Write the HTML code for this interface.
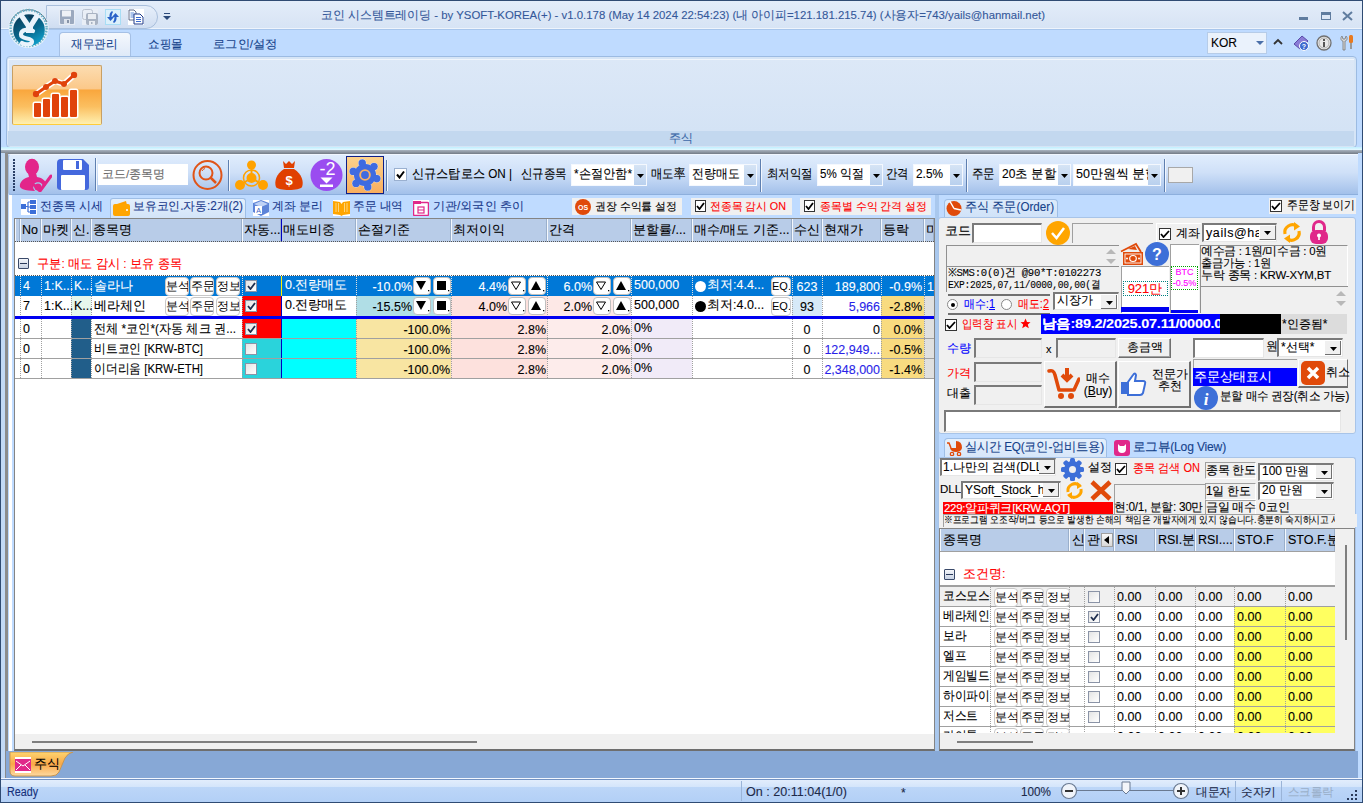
<!DOCTYPE html>
<html><head><meta charset="utf-8">
<style>
*{box-sizing:border-box;margin:0;padding:0}
html,body{width:1363px;height:803px;overflow:hidden;background:#BFDBFF;font-family:"Liberation Sans",sans-serif;font-size:12px;color:#000}
.a{position:absolute}
.t{position:absolute;white-space:nowrap;overflow:visible;-webkit-text-stroke:0.1px currentColor}
.cb{position:absolute;width:13px;height:13px;background:#fff;border:1px solid #8E8F8F}
.cb3{position:absolute;width:12px;height:12px;background:linear-gradient(135deg,#DCDCDC,#fff);border:1px solid #8B94A8}
.gb{position:absolute;background:#fff;border:1px solid #C8C8C8;border-radius:4px;font-size:12px;line-height:17px;text-align:center;white-space:nowrap;overflow:hidden}
.sunk{position:absolute;background:#F0F0F0;border-top:2px solid #7A7A7A;border-left:2px solid #7A7A7A;border-right:1px solid #E6E6E6;border-bottom:1px solid #E6E6E6}
</style></head><body>
<div class="a" style="left:0px;top:0px;width:1363px;height:803px;background:#BFDBFF;border:1px solid #2F4B73;border-bottom:none"></div>
<div class="a" style="left:1px;top:1px;width:1361px;height:28px;background:linear-gradient(#E3EDFA,#DCE7F6 60%,#D7E4F5);border-bottom:1px solid #EEF4FC"></div>
<div class="a" style="left:1px;top:29px;width:1361px;height:1px;background:#A8C6EC"></div>
<div class="a" style="left:1px;top:30px;width:1361px;height:27px;background:#BFDBFF"></div>
<div class="a" style="left:46px;top:5px;width:112px;height:24px;background:linear-gradient(#E7EFFA,#CFDDF1);border:1px solid #A9BFDC;border-radius:0 12px 12px 0"></div>
<svg class="a" style="left:59px;top:9px" width="16" height="16" viewBox="0 0 16 16"><rect x="0" y="0" width="16" height="16" fill="#E6ECF5"/><rect x="1" y="1" width="14" height="14" rx="1" fill="#9AA8BE"/><rect x="3" y="1.5" width="9" height="6" fill="#EEF1F6"/><rect x="5" y="10" width="6" height="5" fill="#DDE3EC"/><rect x="8" y="11" width="2" height="3" fill="#8894A8"/></svg>
<svg class="a" style="left:82px;top:9px" width="16" height="16" viewBox="0 0 16 16"><rect x="0" y="0" width="16" height="16" fill="#E9EEF6"/><rect x="0.5" y="0.5" width="10" height="10" rx="2" fill="none" stroke="#B9C2D0"/><rect x="4" y="4" width="12" height="12" rx="2" fill="#A9B3C3"/><rect x="6" y="5" width="8" height="5" fill="#E8ECF2"/><rect x="7" y="12" width="6" height="4" fill="#E8ECF2"/><rect x="9" y="13" width="1.5" height="2" fill="#A9B3C3"/></svg>
<svg class="a" style="left:105px;top:9px" width="16" height="16" viewBox="0 0 16 16"><rect x="0.5" y="0.5" width="15" height="15" fill="#DCF0FB" stroke="#A8DDF5"/><path d="M7 2 Q4 4 4.5 8 L2 8 L5.5 12 L9 8 L6.5 8 Q6.5 5 8 3 Z" fill="#2A62C8"/><path d="M9 14 Q12 12 11.5 8 L14 8 L10.5 4 L7 8 L9.5 8 Q9.5 11 8 13 Z" fill="#2A62C8"/></svg>
<svg class="a" style="left:128px;top:9px" width="16" height="16" viewBox="0 0 16 16"><rect x="0" y="0" width="16" height="16" fill="#fff"/><path d="M1 1 L6 1 L8 3 L8 11 L1 11 Z" fill="#fff" stroke="#3A4A70" stroke-width="0.8"/><path d="M2.5 4 L6 4 M2.5 6 L6 6 M2.5 8 L6 8" stroke="#5A8AD8"/><path d="M6 5 L12 5 L15 8 L15 15 L6 15 Z" fill="#fff" stroke="#1F3A8A" stroke-width="1"/><path d="M8 8.5 L13 8.5 M8 10.5 L13 10.5 M8 12.5 L13 12.5" stroke="#3A6AD0"/></svg>
<svg class="a" style="left:163px;top:13px" width="8" height="8" viewBox="0 0 8 8"><rect x="1" y="0" width="6" height="1" fill="#2C4A7A"/><path d="M0 3 L8 3 L4 7 Z" fill="#2C4A7A"/></svg>
<svg class="a" style="left:0px;top:0px" width="56" height="52" viewBox="0 0 56 52"><defs><linearGradient id="lg" x1="0.2" y1="0" x2="0.8" y2="1"><stop offset="0" stop-color="#0B3F5C"/><stop offset="0.55" stop-color="#08698E"/><stop offset="1" stop-color="#10A6D2"/></linearGradient></defs>
<circle cx="28.6" cy="28" r="20" fill="#EAF3FB"/>
<path d="M10 24 A19.5 19.5 0 0 1 47 22" fill="none" stroke="#4A5E70" stroke-width="0.9"/>
<circle cx="28.6" cy="28" r="18" fill="none" stroke="#6FB2C8" stroke-width="2.4" stroke-dasharray="1.6 1.3"/>
<circle cx="29" cy="30" r="15.8" fill="url(#lg)"/>
<path d="M18 15 L23 13.5 L29.5 23 L35 14 L40 16 L33 27 L33 33 L26 33 L26 27 Z" fill="#EAF3FB"/>
<path d="M27 15 L34 15 L30.5 20 Z" fill="#0B3F5C"/>
<path d="M33 31 C30 29 21 29 21 34.5 C21 40 32 37 32 41.5 C32 45 25 45 22 43" fill="none" stroke="#EAF3FB" stroke-width="4.2" stroke-linecap="round"/></svg>
<div class="t" id="s0" style="left:321px;top:8px;height:14px;line-height:14px;font-size:11.5px;color:#34589A;transform:scaleX(0.9902);transform-origin:0 50%">코인 시스템트레이딩 - by YSOFT-KOREA(+) - v1.0.178 (May 14 2024 22:54:23) (내 아이피=121.181.215.74) (사용자=743/yails@hanmail.net)</div>
<div class="a" style="left:1299px;top:17px;width:9px;height:3px;background:#5F7C9F"></div>
<div class="a" style="left:1321px;top:12px;width:10px;height:8px;border:1px solid #5F7C9F;border-top:3px solid #5F7C9F"></div>
<svg class="a" style="left:1342px;top:11px" width="11" height="10" viewBox="0 0 11 10"><path d="M1 1 L10 9 M10 1 L1 9" stroke="#5F7C9F" stroke-width="2"/></svg>
<div class="a" style="left:59px;top:32px;width:72px;height:26px;background:linear-gradient(#F4F8FD,#E9F0FA 50%,#DCE8F7);border:1px solid #A5C0E5;border-bottom:none;border-radius:4px 4px 0 0"></div>
<div class="t" id="s1" style="left:71px;top:37px;height:14px;line-height:14px;font-size:11.5px;color:#15428B;transform:scaleX(0.9688);transform-origin:0 50%">재무관리</div>
<div class="t" id="s2" style="left:148px;top:37px;height:14px;line-height:14px;font-size:11.5px;color:#15428B;transform:scaleX(0.9611);transform-origin:0 50%">쇼핑몰</div>
<div class="t" id="s3" style="left:213px;top:37px;height:14px;line-height:14px;font-size:11.5px;color:#15428B;transform:scaleX(1.0221);transform-origin:0 50%">로그인/설정</div>
<div class="a" style="left:1207px;top:32px;width:60px;height:22px;background:#EAF2FC;border:1px solid #B6CCE8"></div>
<div class="t" style="left:1211px;top:36px;height:14px;line-height:14px;font-size:12px;color:#000">KOR</div>
<svg class="a" style="left:1256px;top:41px" width="8" height="5" viewBox="0 0 8 5"><path d="M0 0 L8 0 L4 4 Z" fill="#4A6FA8"/></svg>
<svg class="a" style="left:1273px;top:38px" width="10" height="7" viewBox="0 0 10 7"><path d="M1 6 L5 2 L9 6" fill="none" stroke="#333" stroke-width="1.8"/></svg>
<svg class="a" style="left:1293px;top:35px" width="16" height="16" viewBox="0 0 16 16"><path d="M1 9 L9 1 L15 6 L7 14 Z" fill="#8A7BD6" stroke="#5A4AA8"/><circle cx="11" cy="11" r="4.5" fill="#3E6AD0" stroke="#fff"/><text x="11" y="14" font-size="7" fill="#fff" text-anchor="middle" font-family="Liberation Sans" font-weight="bold">?</text></svg>
<svg class="a" style="left:1316px;top:35px" width="16" height="16" viewBox="0 0 16 16"><circle cx="8" cy="8" r="7" fill="#E8E8E8" stroke="#707070" stroke-width="1.3"/><circle cx="8" cy="8" r="5" fill="none" stroke="#B0B0B0"/><rect x="7" y="7" width="2" height="5" fill="#555"/><rect x="7" y="4" width="2" height="2" fill="#555"/></svg>
<svg class="a" style="left:1339px;top:35px" width="16" height="16" viewBox="0 0 16 16"><path d="M3 1 C1 3 2 6 4 6 L4 15 L6 15 L6 6 C8 6 9 3 7 1 L6 4 L4 4 Z" fill="#D8D8D8" stroke="#777" stroke-width="0.8"/><rect x="10" y="0" width="4" height="8" rx="1.5" fill="#E87A20"/><rect x="11" y="8" width="2" height="6" fill="#999"/></svg>
<div class="a" style="left:6px;top:56px;width:1351px;height:92px;background:#D6E5F6;border:1px solid #9CBBE2;border-radius:4px"></div>
<div class="a" style="left:8px;top:59px;width:1346px;height:72px;background:linear-gradient(#DCE8F7,#D4E3F5);border-top:1px solid #F1F6FC;border-left:1px solid #EEF4FB"></div>
<div class="a" style="left:8px;top:131px;width:1346px;height:15px;background:#C3D8EF"></div>
<div class="t" style="left:669px;top:131px;height:15px;line-height:15px;font-size:11.5px;color:#3D69A8">주식</div>
<div class="a" style="left:12px;top:65px;width:90px;height:60px;background:linear-gradient(#FCDCB0,#FBC889 40%,#F9A63C 41%,#FBBF60 70%,#FFF0B0);border:1px solid #C8A064;border-bottom-color:#FFCC3A;border-radius:2px"></div>
<svg class="a" style="left:30px;top:70px" width="55" height="50" viewBox="0 0 55 50"><g stroke="#fff" stroke-width="3" fill="#E0420B" stroke-linejoin="round">
<rect x="4" y="33" width="7" height="14" rx="1"/><rect x="13" y="29" width="7" height="18" rx="1"/><rect x="22" y="24" width="7" height="23" rx="1"/><rect x="31" y="27" width="7" height="20" rx="1"/><rect x="40" y="20" width="7" height="27" rx="1"/></g>
<g fill="#E0420B"><rect x="4" y="33" width="7" height="14" rx="1"/><rect x="13" y="29" width="7" height="18" rx="1"/><rect x="22" y="24" width="7" height="23" rx="1"/><rect x="31" y="27" width="7" height="20" rx="1"/><rect x="40" y="20" width="7" height="27" rx="1"/></g>
<path d="M6 24 L16 17 L25 11 L34 14 L44 5" fill="none" stroke="#fff" stroke-width="6" stroke-linecap="round" stroke-linejoin="round"/>
<path d="M6 24 L16 17 L25 11 L34 14 L44 5" fill="none" stroke="#E0420B" stroke-width="3" stroke-linecap="round" stroke-linejoin="round"/>
<g fill="#E0420B"><circle cx="6" cy="24" r="3.2"/><circle cx="16" cy="17" r="3"/><circle cx="25" cy="11" r="3"/><circle cx="34" cy="14" r="3"/><circle cx="44" cy="5" r="3.2"/></g></svg>
<div class="a" style="left:1px;top:147px;width:1361px;height:3px;background:linear-gradient(#BFEFFF,#E6F8FF)"></div>
<div class="a" style="left:1px;top:150px;width:1361px;height:4px;background:linear-gradient(#A9B4C0,#737B86)"></div>
<div class="a" style="left:1px;top:153px;width:5px;height:625px;background:#C2D9F5"></div>
<div class="a" style="left:5px;top:153px;width:3px;height:600px;background:#8C8C8C"></div>
<div class="a" style="left:5px;top:753px;width:1px;height:25px;background:#8C8C8C"></div>
<div class="a" style="left:8px;top:154px;width:1350px;height:41px;background:linear-gradient(#E0EDFD,#CFE0F8 45%,#AFC9EE 85%,#A2C0EA);border-top:1px solid #F0F6FE;border-left:1px solid #A7BEDD;border-bottom:1px solid #8DAFDD;border-radius:3px 0 0 3px"></div>
<div class="a" style="left:13px;top:159px;width:2px;height:2px;background:#2A3F66"></div>
<div class="a" style="left:13px;top:162px;width:2px;height:2px;background:#2A3F66"></div>
<div class="a" style="left:13px;top:165px;width:2px;height:2px;background:#2A3F66"></div>
<div class="a" style="left:13px;top:168px;width:2px;height:2px;background:#2A3F66"></div>
<div class="a" style="left:13px;top:171px;width:2px;height:2px;background:#2A3F66"></div>
<div class="a" style="left:13px;top:174px;width:2px;height:2px;background:#2A3F66"></div>
<div class="a" style="left:13px;top:177px;width:2px;height:2px;background:#2A3F66"></div>
<div class="a" style="left:13px;top:180px;width:2px;height:2px;background:#2A3F66"></div>
<div class="a" style="left:13px;top:183px;width:2px;height:2px;background:#2A3F66"></div>
<div class="a" style="left:13px;top:186px;width:2px;height:2px;background:#2A3F66"></div>
<div class="a" style="left:13px;top:189px;width:2px;height:2px;background:#2A3F66"></div>
<svg class="a" style="left:19px;top:158px" width="33" height="34" viewBox="0 0 33 34"><ellipse cx="13" cy="9" rx="7" ry="8.3" fill="#E3258A"/><path d="M9 15 L17 15 L18 19 C24 20 27 23 27 27 L22 33 C14 33 3 33 1 29 C0 24 5 20 10 19 Z" fill="#E3258A"/><circle cx="19" cy="29" r="4.2" fill="none" stroke="#9CD3F0" stroke-width="1.3"/><path d="M15 27 L21 33 L32 18" fill="none" stroke="#E3258A" stroke-width="3" stroke-linecap="round"/></svg>
<svg class="a" style="left:57px;top:158px" width="33" height="33" viewBox="0 0 33 33"><path d="M0 5 Q0 1 4 1 L26 1 L32 7 L32 29 Q32 32 29 32 L4 32 Q0 32 0 29 Z" fill="#4468DD"/><rect x="6" y="2" width="19" height="10" rx="1" fill="#fff"/><rect x="19" y="3" width="3" height="8" fill="#4468DD"/><rect x="4" y="17" width="24" height="15" rx="1" fill="#fff"/></svg>
<div class="a" style="left:95px;top:158px;width:1px;height:33px;background:#5E7FB0"></div>
<div class="a" style="left:96px;top:158px;width:1px;height:33px;background:#F2F7FE"></div>
<div class="a" style="left:98px;top:164px;width:90px;height:21px;background:#fff"></div>
<div class="t" style="left:102px;top:167px;height:15px;line-height:15px;font-size:11.5px;color:#6A6A6A">코드/종목명</div>
<svg class="a" style="left:192px;top:159px" width="31" height="32" viewBox="0 0 31 32"><circle cx="15.5" cy="16" r="14" fill="none" stroke="#E05418" stroke-width="2"/><circle cx="14" cy="14" r="6.5" fill="none" stroke="#E05418" stroke-width="2"/><path d="M18.5 18.5 L24 24" stroke="#E05418" stroke-width="2.5"/><path d="M10 12 Q11 10 13 9.5" stroke="#E05418" fill="none" stroke-width="1"/></svg>
<div class="a" style="left:228px;top:160px;width:1px;height:31px;background:#5E7FB0"></div>
<div class="a" style="left:229px;top:160px;width:1px;height:31px;background:#F2F7FE"></div>
<svg class="a" style="left:235px;top:160px" width="33" height="31" viewBox="0 0 33 31"><g fill="#FFA200"><circle cx="16.5" cy="5" r="4.5"/><circle cx="16.5" cy="18" r="5"/><circle cx="5" cy="25" r="5"/><circle cx="28" cy="25" r="5"/></g><path d="M16.5 5 L16.5 18 L5 25 M16.5 18 L28 25" stroke="#FFA200" stroke-width="2" fill="none"/><circle cx="16.5" cy="18" r="8" fill="none" stroke="#FFA200" stroke-width="1.5"/></svg>
<svg class="a" style="left:274px;top:160px" width="30" height="31" viewBox="0 0 30 31"><path d="M9 1 L12 4 L15 1 L18 4 L21 1 L20 8 L10 8 Z" fill="#E04000"/><path d="M10 9 C2 14 0 22 2 27 C4 31 26 31 28 27 C30 22 28 14 20 9 Z" fill="#E04000"/><text x="15" y="25" font-size="13" fill="#fff" text-anchor="middle" font-family="Liberation Sans" font-weight="bold">$</text></svg>
<svg class="a" style="left:310px;top:159px" width="33" height="32" viewBox="0 0 33 32"><circle cx="16.5" cy="16" r="16" fill="#9A4CF0"/><text x="17.5" y="16" font-size="18" fill="#fff" text-anchor="middle" font-family="Liberation Sans">-2</text><path d="M10.5 18.5 L22.5 18.5 L16.5 24.5 Z" fill="#fff"/><rect x="10" y="25.5" width="13" height="2.5" fill="#fff"/></svg>
<div class="a" style="left:346px;top:156px;width:38px;height:38px;background:linear-gradient(#FDD28C,#F9AE5E);border:1.5px solid #0E1E86"></div>
<svg class="a" style="left:347px;top:157px" width="36" height="36" viewBox="0 0 36 36"><g fill="#3F6BE0" stroke="#fff" stroke-width="0.6"><circle cx="18" cy="18" r="11"/><circle cx="15.23" cy="6.02" r="3.8"/><circle cx="27.00" cy="9.61" r="3.8"/><circle cx="29.76" cy="21.60" r="3.8"/><circle cx="20.77" cy="29.98" r="3.8"/><circle cx="9.00" cy="26.39" r="3.8"/><circle cx="6.24" cy="14.40" r="3.8"/></g><g fill="#3F6BE0"><circle cx="18" cy="18" r="11"/><circle cx="15.23" cy="6.02" r="3.6"/><circle cx="27.00" cy="9.61" r="3.6"/><circle cx="29.76" cy="21.60" r="3.6"/><circle cx="20.77" cy="29.98" r="3.6"/><circle cx="9.00" cy="26.39" r="3.6"/><circle cx="6.24" cy="14.40" r="3.6"/></g><circle cx="18" cy="18" r="5.8" fill="#F9B163"/><circle cx="18" cy="18" r="3.9" fill="#3F6BE0"/></svg>
<div class="a" style="left:386px;top:160px;width:1px;height:31px;background:#5E7FB0"></div>
<div class="a" style="left:387px;top:160px;width:1px;height:31px;background:#F2F7FE"></div>
<div class="a" style="left:394px;top:168px;width:13px;height:13px;background:#fff;border:1px solid #9AB0D0"></div>
<svg class="a" style="left:396px;top:170px" width="9" height="9" viewBox="0 0 9 9"><path d="M1 4.5 L3.5 7.5 L8 1.5" fill="none" stroke="#000" stroke-width="2"/></svg>
<div class="t" id="s4" style="left:412px;top:166px;height:16px;line-height:16px;font-size:12.5px;color:#000;transform:scaleX(0.9350);transform-origin:0 50%">신규스탑로스 ON |</div>
<div class="t" id="s5" style="left:521px;top:166px;height:16px;line-height:16px;font-size:12.5px;color:#000;transform:scaleX(0.8846);transform-origin:0 50%">신규종목</div>
<div class="a" style="left:571px;top:164px;width:76px;height:22px;background:#fff;border:1px solid #F4F8FE"></div>
<div class="t" id="s6" style="left:574px;top:166px;height:16px;line-height:16px;font-size:12.5px;color:#000;transform:scaleX(0.9395);transform-origin:0 50%">*손절안함*</div>
<div class="a" style="left:634px;top:165px;width:12px;height:20px;background:linear-gradient(#D6E4F5,#B9D0EE)"></div>
<svg class="a" style="left:637px;top:174px" width="7" height="4" viewBox="0 0 7 4"><path d="M0 0 L7 0 L3.5 4 Z" fill="#000"/></svg>
<div class="t" id="s7" style="left:651px;top:166px;height:16px;line-height:16px;font-size:12.5px;color:#000;transform:scaleX(0.8795);transform-origin:0 50%">매도率</div>
<div class="a" style="left:689px;top:164px;width:68px;height:22px;background:#fff;border:1px solid #F4F8FE"></div>
<div class="t" id="s8" style="left:692px;top:166px;height:16px;line-height:16px;font-size:12.5px;color:#000;transform:scaleX(0.9154);transform-origin:0 50%">전량매도</div>
<div class="a" style="left:744px;top:165px;width:12px;height:20px;background:linear-gradient(#D6E4F5,#B9D0EE)"></div>
<svg class="a" style="left:747px;top:174px" width="7" height="4" viewBox="0 0 7 4"><path d="M0 0 L7 0 L3.5 4 Z" fill="#000"/></svg>
<div class="a" style="left:760px;top:159px;width:1px;height:33px;background:#5E7FB0"></div>
<div class="a" style="left:761px;top:159px;width:1px;height:33px;background:#F2F7FE"></div>
<div class="t" id="s9" style="left:767px;top:166px;height:16px;line-height:16px;font-size:12.5px;color:#000;transform:scaleX(0.8846);transform-origin:0 50%">최저익절</div>
<div class="a" style="left:817px;top:164px;width:66px;height:22px;background:#fff;border:1px solid #F4F8FE"></div>
<div class="t" id="s10" style="left:820px;top:166px;height:16px;line-height:16px;font-size:12.5px;color:#000;transform:scaleX(0.9254);transform-origin:0 50%">5% 익절</div>
<div class="a" style="left:870px;top:165px;width:12px;height:20px;background:linear-gradient(#D6E4F5,#B9D0EE)"></div>
<svg class="a" style="left:873px;top:174px" width="7" height="4" viewBox="0 0 7 4"><path d="M0 0 L7 0 L3.5 4 Z" fill="#000"/></svg>
<div class="t" id="s11" style="left:886px;top:166px;height:16px;line-height:16px;font-size:12.5px;color:#000;transform:scaleX(0.8692);transform-origin:0 50%">간격</div>
<div class="a" style="left:913px;top:164px;width:50px;height:22px;background:#fff;border:1px solid #F4F8FE"></div>
<div class="t" id="s12" style="left:916px;top:166px;height:16px;line-height:16px;font-size:12.5px;color:#000;transform:scaleX(0.9474);transform-origin:0 50%">2.5%</div>
<div class="a" style="left:950px;top:165px;width:12px;height:20px;background:linear-gradient(#D6E4F5,#B9D0EE)"></div>
<svg class="a" style="left:953px;top:174px" width="7" height="4" viewBox="0 0 7 4"><path d="M0 0 L7 0 L3.5 4 Z" fill="#000"/></svg>
<div class="a" style="left:966px;top:159px;width:1px;height:33px;background:#5E7FB0"></div>
<div class="a" style="left:967px;top:159px;width:1px;height:33px;background:#F2F7FE"></div>
<div class="t" id="s13" style="left:972px;top:166px;height:16px;line-height:16px;font-size:12.5px;color:#000;transform:scaleX(0.8846);transform-origin:0 50%">주문</div>
<div class="a" style="left:999px;top:164px;width:72px;height:22px;background:#fff;border:1px solid #F4F8FE"></div>
<div class="t" id="s14" style="left:1002px;top:166px;height:16px;line-height:16px;font-size:12.5px;color:#000;transform:scaleX(0.9576);transform-origin:0 50%">20초 분할</div>
<div class="a" style="left:1058px;top:165px;width:12px;height:20px;background:linear-gradient(#D6E4F5,#B9D0EE)"></div>
<svg class="a" style="left:1061px;top:174px" width="7" height="4" viewBox="0 0 7 4"><path d="M0 0 L7 0 L3.5 4 Z" fill="#000"/></svg>
<div class="a" style="left:1073px;top:164px;width:88px;height:22px;overflow:hidden;background:#fff;border:1px solid #F4F8FE"><div class="t" style="left:2px;top:1px;line-height:16px;font-size:12.5px">50만원씩 분할</div></div>
<div class="a" style="left:1148px;top:165px;width:12px;height:20px;background:linear-gradient(#D6E4F5,#B9D0EE)"></div>
<svg class="a" style="left:1151px;top:174px" width="7" height="4" viewBox="0 0 7 4"><path d="M0 0 L7 0 L3.5 4 Z" fill="#000"/></svg>
<div class="a" style="left:1164px;top:159px;width:1px;height:33px;background:#5E7FB0"></div>
<div class="a" style="left:1165px;top:159px;width:1px;height:33px;background:#F2F7FE"></div>
<div class="a" style="left:1168px;top:167px;width:25px;height:16px;background:#F0F0F0;border:1px solid #A8A8A8"></div>
<div class="a" style="left:8px;top:195px;width:1350px;height:557px;background:#BFDBFF"></div>
<div class="a" style="left:9px;top:195px;width:3px;height:557px;background:#fff"></div>
<div class="a" style="left:110px;top:198px;width:136px;height:20px;background:linear-gradient(#E4EFFC,#D3E4F8);border:1px solid #9EBEE6;border-bottom:none;border-radius:3px 3px 0 0"></div>
<svg class="a" style="left:21px;top:199px" width="16" height="16" viewBox="0 0 16 16"><rect width="16" height="16" fill="#fff"/><rect x="0" y="5" width="5" height="5" fill="#3C6FD8"/><rect x="9" y="1" width="6" height="4" fill="#3C6FD8"/><rect x="9" y="6" width="6" height="4" fill="#3C6FD8"/><rect x="9" y="11" width="6" height="4" fill="#3C6FD8"/><path d="M5 7.5 L7 7.5 M7 3 L7 13 M7 3 L9 3 M7 8 L9 8 M7 13 L9 13" stroke="#3C6FD8" stroke-width="1.2" fill="none"/></svg>
<div class="t" id="s15" style="left:40px;top:199px;height:15px;line-height:15px;font-size:12px;color:#1A3A8C;transform:scaleX(0.9946);transform-origin:0 50%">전종목 시세</div>
<svg class="a" style="left:113px;top:200px" width="17" height="16" viewBox="0 0 17 16"><path d="M1 5 L13 1 L14 5 Z" fill="#FFA000"/><rect x="0" y="4" width="17" height="12" rx="2" fill="#FFA500"/><circle cx="14" cy="10" r="1" fill="#fff"/></svg>
<div class="t" id="s16" style="left:133px;top:199px;height:15px;line-height:15px;font-size:12px;color:#1A3A8C;transform:scaleX(0.9820);transform-origin:0 50%">보유코인.자동:2개(2)</div>
<svg class="a" style="left:253px;top:200px" width="16" height="16" viewBox="0 0 16 16"><rect width="16" height="16" fill="#fff"/><path d="M8 0 L16 3 L16 12 L8 16 L0 12 L0 3 Z" fill="#5D84D8"/><path d="M1 4 L8 7 L15 4 L8 1 Z" fill="#BFD2F5"/><rect x="2" y="6" width="7" height="8" fill="#fff"/><text x="5.5" y="13" font-size="7" fill="#3A5FC0" text-anchor="middle" font-family="Liberation Sans">A</text></svg>
<div class="t" id="s17" style="left:272px;top:199px;height:15px;line-height:15px;font-size:12px;color:#1A3A8C;transform:scaleX(0.9933);transform-origin:0 50%">계좌 분리</div>
<svg class="a" style="left:333px;top:200px" width="17" height="16" viewBox="0 0 17 16"><rect width="17" height="16" fill="#fff"/><path d="M0 1 L7 2 L8.5 4 L10 2 L17 1 L17 14 L10 15 L8.5 16 L7 15 L0 14 Z" fill="#FFA500"/><path d="M3 3 L3 12 M5.5 3 L5.5 12 M11.5 3 L11.5 12 M14 3 L14 12" stroke="#FFD57A" stroke-width="1"/></svg>
<div class="t" id="s18" style="left:353px;top:199px;height:15px;line-height:15px;font-size:12px;color:#1A3A8C;transform:scaleX(0.9738);transform-origin:0 50%">주문 내역</div>
<svg class="a" style="left:413px;top:200px" width="16" height="16" viewBox="0 0 16 16"><rect width="16" height="16" fill="#fff"/><rect x="0.5" y="2.5" width="15" height="13" rx="1" fill="#fff" stroke="#E0288A" stroke-width="1.5"/><rect x="0" y="1" width="8" height="3" fill="#E0288A"/><rect x="5" y="7" width="6" height="6" fill="none" stroke="#E0288A" stroke-width="1.2"/><path d="M5 10 L11 10" stroke="#E0288A"/></svg>
<div class="t" id="s19" style="left:433px;top:199px;height:15px;line-height:15px;font-size:12px;color:#1A3A8C;transform:scaleX(1.0036);transform-origin:0 50%">기관/외국인 추이</div>
<div class="a" style="left:572px;top:198px;width:110px;height:17px;background:#F0F0F0"></div>
<svg class="a" style="left:575px;top:199px" width="16" height="16" viewBox="0 0 16 16"><circle cx="8" cy="8" r="8" fill="#E04A0A"/><text x="8" y="11" font-size="7" fill="#fff" text-anchor="middle" font-family="Liberation Sans" font-weight="bold">OS</text></svg>
<div class="t" id="s20" style="left:595px;top:199px;height:15px;line-height:15px;font-size:11px;color:#000;transform:scaleX(0.9865);transform-origin:0 50%">권장 수익률 설정</div>
<div class="a" style="left:691px;top:198px;width:101px;height:17px;background:#F0F0F0"></div>
<div class="a" style="left:695px;top:200px;width:11px;height:12px;background:#fff;border:1px solid #333"></div>
<svg class="a" style="left:696px;top:202px" width="9" height="8" viewBox="0 0 9 8"><path d="M1 4 L3.5 7 L8 1" fill="none" stroke="#000" stroke-width="1.8"/></svg>
<div class="t" id="s21" style="left:710px;top:199px;height:15px;line-height:15px;font-size:11px;color:#FF0000;transform:scaleX(0.9791);transform-origin:0 50%">전종목 감시 ON</div>
<div class="a" style="left:800px;top:198px;width:131px;height:17px;background:#F0F0F0"></div>
<div class="a" style="left:804px;top:200px;width:11px;height:12px;background:#fff;border:1px solid #333"></div>
<svg class="a" style="left:805px;top:202px" width="9" height="8" viewBox="0 0 9 8"><path d="M1 4 L3.5 7 L8 1" fill="none" stroke="#000" stroke-width="1.8"/></svg>
<div class="t" id="s22" style="left:820px;top:199px;height:15px;line-height:15px;font-size:11px;color:#FF0000;transform:scaleX(0.9892);transform-origin:0 50%">종목별 수익 간격 설정</div>
<div class="a" style="left:14px;top:218px;width:921px;height:533px;background:#fff;border:1px solid #848484;border-bottom:2px solid #6E6E6E"></div>
<div class="a" style="left:15px;top:219px;width:919px;height:23px;background:#B8CCE8"></div>
<div class="a" style="left:15px;top:219px;width:1px;height:23px;background:#F4F8FD"></div>
<div class="a" style="left:19px;top:219px;width:1px;height:23px;background:#9AAFCB"></div>
<div class="a" style="left:20px;top:219px;width:1px;height:23px;background:#F4F8FD"></div>
<div class="a" style="left:40px;top:219px;width:1px;height:23px;background:#9AAFCB"></div>
<div class="t" style="left:22px;top:221px;width:18px;overflow:hidden;line-height:18px;font-size:12.5px;color:#000">No</div>
<div class="a" style="left:41px;top:219px;width:1px;height:23px;background:#F4F8FD"></div>
<div class="a" style="left:70px;top:219px;width:1px;height:23px;background:#9AAFCB"></div>
<div class="t" style="left:43px;top:221px;width:27px;overflow:hidden;line-height:18px;font-size:12.5px;color:#000">마켓</div>
<div class="a" style="left:71px;top:219px;width:1px;height:23px;background:#F4F8FD"></div>
<div class="a" style="left:90px;top:219px;width:1px;height:23px;background:#9AAFCB"></div>
<div class="t" style="left:73px;top:221px;width:17px;overflow:hidden;line-height:18px;font-size:12.5px;color:#000">신.</div>
<div class="a" style="left:91px;top:219px;width:1px;height:23px;background:#F4F8FD"></div>
<div class="a" style="left:241px;top:219px;width:1px;height:23px;background:#9AAFCB"></div>
<div class="t" style="left:93px;top:221px;width:148px;overflow:hidden;line-height:18px;font-size:12.5px;color:#000">종목명</div>
<div class="a" style="left:242px;top:219px;width:1px;height:23px;background:#F4F8FD"></div>
<div class="a" style="left:280px;top:219px;width:1px;height:23px;background:#9AAFCB"></div>
<div class="t" style="left:244px;top:221px;width:36px;overflow:hidden;line-height:18px;font-size:12.5px;color:#000">자동...</div>
<div class="a" style="left:281px;top:219px;width:1px;height:23px;background:#F4F8FD"></div>
<div class="a" style="left:355px;top:219px;width:1px;height:23px;background:#9AAFCB"></div>
<div class="t" style="left:283px;top:221px;width:72px;overflow:hidden;line-height:18px;font-size:12.5px;color:#000">매도비중</div>
<div class="a" style="left:356px;top:219px;width:1px;height:23px;background:#F4F8FD"></div>
<div class="a" style="left:450px;top:219px;width:1px;height:23px;background:#9AAFCB"></div>
<div class="t" style="left:358px;top:221px;width:92px;overflow:hidden;line-height:18px;font-size:12.5px;color:#000">손절기준</div>
<div class="a" style="left:451px;top:219px;width:1px;height:23px;background:#F4F8FD"></div>
<div class="a" style="left:546px;top:219px;width:1px;height:23px;background:#9AAFCB"></div>
<div class="t" style="left:453px;top:221px;width:93px;overflow:hidden;line-height:18px;font-size:12.5px;color:#000">최저이익</div>
<div class="a" style="left:547px;top:219px;width:1px;height:23px;background:#F4F8FD"></div>
<div class="a" style="left:630px;top:219px;width:1px;height:23px;background:#9AAFCB"></div>
<div class="t" style="left:549px;top:221px;width:81px;overflow:hidden;line-height:18px;font-size:12.5px;color:#000">간격</div>
<div class="a" style="left:631px;top:219px;width:1px;height:23px;background:#F4F8FD"></div>
<div class="a" style="left:691px;top:219px;width:1px;height:23px;background:#9AAFCB"></div>
<div class="t" style="left:633px;top:221px;width:58px;overflow:hidden;line-height:18px;font-size:12.5px;color:#000">분할률/...</div>
<div class="a" style="left:692px;top:219px;width:1px;height:23px;background:#F4F8FD"></div>
<div class="a" style="left:791px;top:219px;width:1px;height:23px;background:#9AAFCB"></div>
<div class="t" style="left:694px;top:221px;width:97px;overflow:hidden;line-height:18px;font-size:12.5px;color:#000">매수/매도 기준...</div>
<div class="a" style="left:792px;top:219px;width:1px;height:23px;background:#F4F8FD"></div>
<div class="a" style="left:821px;top:219px;width:1px;height:23px;background:#9AAFCB"></div>
<div class="t" style="left:794px;top:221px;width:27px;overflow:hidden;line-height:18px;font-size:12.5px;color:#000">수신</div>
<div class="a" style="left:822px;top:219px;width:1px;height:23px;background:#F4F8FD"></div>
<div class="a" style="left:880px;top:219px;width:1px;height:23px;background:#9AAFCB"></div>
<div class="t" style="left:824px;top:221px;width:56px;overflow:hidden;line-height:18px;font-size:12.5px;color:#000">현재가</div>
<div class="a" style="left:881px;top:219px;width:1px;height:23px;background:#F4F8FD"></div>
<div class="a" style="left:923px;top:219px;width:1px;height:23px;background:#9AAFCB"></div>
<div class="t" style="left:883px;top:221px;width:40px;overflow:hidden;line-height:18px;font-size:12.5px;color:#000">등락</div>
<div class="a" style="left:924px;top:219px;width:1px;height:23px;background:#F4F8FD"></div>
<div class="a" style="left:933px;top:219px;width:1px;height:23px;background:#9AAFCB"></div>
<div class="t" style="left:926px;top:221px;width:7px;overflow:hidden;line-height:18px;font-size:12.5px;color:#000">미</div>
<div class="a" style="left:281px;top:219px;width:1px;height:23px;background:#0000C0"></div>
<div class="a" style="left:15px;top:241px;width:919px;height:1px;background:repeating-linear-gradient(90deg,#555 0 1px,transparent 1px 2px)"></div>
<div class="a" style="left:18px;top:258px;width:11px;height:11px;background:linear-gradient(#F4F6FA,#C9D3E4);border:1px solid #3A4A6A;border-radius:1px"></div>
<div class="a" style="left:20px;top:263px;width:7px;height:1px;background:#2A3A5A"></div>
<div class="t" id="s23" style="left:37px;top:256px;height:16px;line-height:16px;font-size:12.5px;color:#FF0000;transform:scaleX(0.9397);transform-origin:0 50%">구분: 매도 감시 : 보유 종목</div>
<div class="a" style="left:15px;top:275px;width:919px;height:1px;background:repeating-linear-gradient(90deg,#555 0 1px,transparent 1px 2px)"></div>
<div class="a" style="left:15px;top:276px;width:919px;height:20px;background:#0078D7"></div>
<div class="a" style="left:20px;top:276px;width:1px;height:20px;background:repeating-linear-gradient(180deg,#E0E0E0 0 1px,transparent 1px 2px)"></div>
<div class="a" style="left:41px;top:276px;width:1px;height:20px;background:repeating-linear-gradient(180deg,#E0E0E0 0 1px,transparent 1px 2px)"></div>
<div class="a" style="left:71px;top:276px;width:1px;height:20px;background:repeating-linear-gradient(180deg,#E0E0E0 0 1px,transparent 1px 2px)"></div>
<div class="a" style="left:91px;top:276px;width:1px;height:20px;background:repeating-linear-gradient(180deg,#E0E0E0 0 1px,transparent 1px 2px)"></div>
<div class="a" style="left:242px;top:276px;width:1px;height:20px;background:repeating-linear-gradient(180deg,#E0E0E0 0 1px,transparent 1px 2px)"></div>
<div class="a" style="left:281px;top:276px;width:1px;height:20px;background:repeating-linear-gradient(180deg,#E0E0E0 0 1px,transparent 1px 2px)"></div>
<div class="a" style="left:356px;top:276px;width:1px;height:20px;background:repeating-linear-gradient(180deg,#E0E0E0 0 1px,transparent 1px 2px)"></div>
<div class="a" style="left:451px;top:276px;width:1px;height:20px;background:repeating-linear-gradient(180deg,#E0E0E0 0 1px,transparent 1px 2px)"></div>
<div class="a" style="left:547px;top:276px;width:1px;height:20px;background:repeating-linear-gradient(180deg,#E0E0E0 0 1px,transparent 1px 2px)"></div>
<div class="a" style="left:631px;top:276px;width:1px;height:20px;background:repeating-linear-gradient(180deg,#E0E0E0 0 1px,transparent 1px 2px)"></div>
<div class="a" style="left:692px;top:276px;width:1px;height:20px;background:repeating-linear-gradient(180deg,#E0E0E0 0 1px,transparent 1px 2px)"></div>
<div class="a" style="left:792px;top:276px;width:1px;height:20px;background:repeating-linear-gradient(180deg,#E0E0E0 0 1px,transparent 1px 2px)"></div>
<div class="a" style="left:822px;top:276px;width:1px;height:20px;background:repeating-linear-gradient(180deg,#E0E0E0 0 1px,transparent 1px 2px)"></div>
<div class="a" style="left:881px;top:276px;width:1px;height:20px;background:repeating-linear-gradient(180deg,#E0E0E0 0 1px,transparent 1px 2px)"></div>
<div class="a" style="left:924px;top:276px;width:1px;height:20px;background:repeating-linear-gradient(180deg,#E0E0E0 0 1px,transparent 1px 2px)"></div>
<div class="a" style="left:281px;top:276px;width:1px;height:20px;background:#FFF000"></div>
<div class="t" style="left:23px;top:278px;height:16px;line-height:16px;color:#fff;font-size:12.5px">4</div>
<div class="t" style="left:44px;top:278px;height:16px;line-height:16px;color:#fff;font-size:12.5px">1:K...</div>
<div class="t" style="left:74px;top:278px;height:16px;line-height:16px;color:#fff;font-size:12.5px">K...</div>
<div class="t" style="left:94px;top:278px;height:16px;line-height:16px;color:#fff;font-size:12.5px">솔라나</div>
<div class="gb" style="left:165px;top:277px;width:24px;height:19px">분석</div>
<div class="gb" style="left:190px;top:277px;width:24px;height:19px">주문</div>
<div class="gb" style="left:216px;top:277px;width:24px;height:19px">정보</div>
<div class="a" style="left:245px;top:280px;width:12px;height:12px;background:linear-gradient(135deg,#E4E4E4,#FFFFFF);border:1px solid #8A93A6"></div>
<svg class="a" style="left:247px;top:282px" width="9" height="8" viewBox="0 0 9 8"><path d="M1 4 L3.5 7 L8 1" fill="none" stroke="#1F2E4E" stroke-width="1.8"/></svg>
<div class="t" style="left:285px;top:277px;height:16px;line-height:16px;color:#fff;font-size:12.5px">0.전량매도</div>
<div class="t" style="left:212px;width:200px;text-align:right;top:279px;height:16px;line-height:16px;color:#fff;font-size:12.5px">-10.0%</div>
<div class="gb" style="left:413px;top:277px;width:18px;height:18px;border-color:#BFBFBF"></div>
<svg class="a" style="left:414px;top:278px" width="16" height="16" viewBox="0 0 16 16"><path d="M2 3 L12 3 L7 12 Z" fill="#000"/><rect x="14" y="12" width="1.3" height="1.3" fill="#000"/></svg>
<div class="gb" style="left:433px;top:277px;width:18px;height:18px;border-color:#BFBFBF"></div>
<svg class="a" style="left:434px;top:278px" width="16" height="16" viewBox="0 0 16 16"><rect x="3" y="3" width="9" height="9" fill="#000"/><rect x="14" y="12" width="1.3" height="1.3" fill="#000"/></svg>
<div class="t" style="left:307px;width:200px;text-align:right;top:279px;height:16px;line-height:16px;color:#fff;font-size:12.5px">4.4%</div>
<div class="gb" style="left:508px;top:277px;width:18px;height:18px;border-color:#BFBFBF"></div>
<svg class="a" style="left:509px;top:278px" width="16" height="16" viewBox="0 0 16 16"><path d="M2.5 4 L11.5 4 L7 11.5 Z" fill="none" stroke="#000" stroke-width="1"/><rect x="14" y="12" width="1.3" height="1.3" fill="#000"/></svg>
<div class="gb" style="left:528px;top:277px;width:18px;height:18px;border-color:#BFBFBF"></div>
<svg class="a" style="left:529px;top:278px" width="16" height="16" viewBox="0 0 16 16"><path d="M2 12 L12 12 L7 3 Z" fill="#000"/><rect x="14" y="12" width="1.3" height="1.3" fill="#000"/></svg>
<div class="t" style="left:392px;width:200px;text-align:right;top:279px;height:16px;line-height:16px;color:#fff;font-size:12.5px">6.0%</div>
<div class="gb" style="left:593px;top:277px;width:18px;height:18px;border-color:#BFBFBF"></div>
<svg class="a" style="left:594px;top:278px" width="16" height="16" viewBox="0 0 16 16"><path d="M2.5 4 L11.5 4 L7 11.5 Z" fill="none" stroke="#000" stroke-width="1"/><rect x="14" y="12" width="1.3" height="1.3" fill="#000"/></svg>
<div class="gb" style="left:613px;top:277px;width:18px;height:18px;border-color:#BFBFBF"></div>
<svg class="a" style="left:614px;top:278px" width="16" height="16" viewBox="0 0 16 16"><path d="M2 12 L12 12 L7 3 Z" fill="#000"/><rect x="14" y="12" width="1.3" height="1.3" fill="#000"/></svg>
<div class="t" style="left:634px;top:277px;height:16px;line-height:16px;color:#fff;font-size:12.5px">500,000</div>
<svg class="a" style="left:695px;top:281px" width="11" height="11" viewBox="0 0 11 11"><circle cx="5.5" cy="5.5" r="5.5" fill="#fff"/></svg>
<div class="t" style="left:707px;top:277px;height:16px;line-height:16px;color:#fff;font-size:12.5px">최저:4.4...</div>
<div class="gb" style="left:771px;top:277px;width:20px;height:19px;font-size:11px;color:#000">EQ.</div>
<div class="t" style="left:792px;width:30px;text-align:center;top:279px;height:16px;line-height:16px;color:#fff;font-size:12.5px">623</div>
<div class="t" style="left:680px;width:200px;text-align:right;top:279px;height:16px;line-height:16px;color:#fff;font-size:12.5px">189,800</div>
<div class="t" style="left:722px;width:200px;text-align:right;top:279px;height:16px;line-height:16px;color:#fff;font-size:12.5px">-0.9%</div>
<div class="t" style="left:927px;top:279px;height:16px;line-height:16px;color:#fff;font-size:12.5px">1</div>
<div class="a" style="left:71px;top:296px;width:20px;height:20px;background:#E6F7EC"></div>
<div class="a" style="left:242px;top:296px;width:39px;height:20px;background:#FF0000"></div>
<div class="a" style="left:356px;top:296px;width:95px;height:20px;background:#B0DEE6"></div>
<div class="a" style="left:451px;top:296px;width:96px;height:20px;background:#FDE1DD"></div>
<div class="a" style="left:547px;top:296px;width:84px;height:20px;background:#FDE8E6"></div>
<div class="a" style="left:792px;top:296px;width:30px;height:20px;background:#D6E9F8"></div>
<div class="a" style="left:881px;top:296px;width:43px;height:20px;background:#F8DB80"></div>
<div class="a" style="left:924px;top:296px;width:10px;height:20px;background:#E0E0E0"></div>
<div class="a" style="left:20px;top:296px;width:1px;height:20px;background:repeating-linear-gradient(180deg,#A0A0A0 0 1px,transparent 1px 2px)"></div>
<div class="a" style="left:41px;top:296px;width:1px;height:20px;background:repeating-linear-gradient(180deg,#A0A0A0 0 1px,transparent 1px 2px)"></div>
<div class="a" style="left:71px;top:296px;width:1px;height:20px;background:repeating-linear-gradient(180deg,#A0A0A0 0 1px,transparent 1px 2px)"></div>
<div class="a" style="left:91px;top:296px;width:1px;height:20px;background:repeating-linear-gradient(180deg,#A0A0A0 0 1px,transparent 1px 2px)"></div>
<div class="a" style="left:242px;top:296px;width:1px;height:20px;background:repeating-linear-gradient(180deg,#A0A0A0 0 1px,transparent 1px 2px)"></div>
<div class="a" style="left:281px;top:296px;width:1px;height:20px;background:repeating-linear-gradient(180deg,#A0A0A0 0 1px,transparent 1px 2px)"></div>
<div class="a" style="left:356px;top:296px;width:1px;height:20px;background:repeating-linear-gradient(180deg,#A0A0A0 0 1px,transparent 1px 2px)"></div>
<div class="a" style="left:451px;top:296px;width:1px;height:20px;background:repeating-linear-gradient(180deg,#A0A0A0 0 1px,transparent 1px 2px)"></div>
<div class="a" style="left:547px;top:296px;width:1px;height:20px;background:repeating-linear-gradient(180deg,#A0A0A0 0 1px,transparent 1px 2px)"></div>
<div class="a" style="left:631px;top:296px;width:1px;height:20px;background:repeating-linear-gradient(180deg,#A0A0A0 0 1px,transparent 1px 2px)"></div>
<div class="a" style="left:692px;top:296px;width:1px;height:20px;background:repeating-linear-gradient(180deg,#A0A0A0 0 1px,transparent 1px 2px)"></div>
<div class="a" style="left:792px;top:296px;width:1px;height:20px;background:repeating-linear-gradient(180deg,#A0A0A0 0 1px,transparent 1px 2px)"></div>
<div class="a" style="left:822px;top:296px;width:1px;height:20px;background:repeating-linear-gradient(180deg,#A0A0A0 0 1px,transparent 1px 2px)"></div>
<div class="a" style="left:881px;top:296px;width:1px;height:20px;background:repeating-linear-gradient(180deg,#A0A0A0 0 1px,transparent 1px 2px)"></div>
<div class="a" style="left:924px;top:296px;width:1px;height:20px;background:repeating-linear-gradient(180deg,#A0A0A0 0 1px,transparent 1px 2px)"></div>
<div class="t" style="left:23px;top:298px;height:16px;line-height:16px;color:#000;font-size:12.5px">7</div>
<div class="t" style="left:44px;top:298px;height:16px;line-height:16px;color:#000;font-size:12.5px">1:K...</div>
<div class="t" style="left:74px;top:298px;height:16px;line-height:16px;color:#000;font-size:12.5px">K...</div>
<div class="t" style="left:94px;top:298px;height:16px;line-height:16px;color:#000;font-size:12.5px">베라체인</div>
<div class="gb" style="left:165px;top:297px;width:24px;height:19px">분석</div>
<div class="gb" style="left:190px;top:297px;width:24px;height:19px">주문</div>
<div class="gb" style="left:216px;top:297px;width:24px;height:19px">정보</div>
<div class="a" style="left:245px;top:300px;width:12px;height:12px;background:linear-gradient(135deg,#E4E4E4,#FFFFFF);border:1px solid #8A93A6"></div>
<svg class="a" style="left:247px;top:302px" width="9" height="8" viewBox="0 0 9 8"><path d="M1 4 L3.5 7 L8 1" fill="none" stroke="#1F2E4E" stroke-width="1.8"/></svg>
<div class="a" style="left:281px;top:296px;width:1px;height:20px;background:#0000C0"></div>
<div class="t" style="left:285px;top:297px;height:16px;line-height:16px;color:#000;font-size:12.5px">0.전량매도</div>
<div class="t" style="left:212px;width:200px;text-align:right;top:299px;height:16px;line-height:16px;color:#000;font-size:12.5px">-15.5%</div>
<div class="gb" style="left:413px;top:297px;width:18px;height:18px;border-color:#BFBFBF"></div>
<svg class="a" style="left:414px;top:298px" width="16" height="16" viewBox="0 0 16 16"><path d="M2 3 L12 3 L7 12 Z" fill="#000"/><rect x="14" y="12" width="1.3" height="1.3" fill="#000"/></svg>
<div class="gb" style="left:433px;top:297px;width:18px;height:18px;border-color:#BFBFBF"></div>
<svg class="a" style="left:434px;top:298px" width="16" height="16" viewBox="0 0 16 16"><rect x="3" y="3" width="9" height="9" fill="#000"/><rect x="14" y="12" width="1.3" height="1.3" fill="#000"/></svg>
<div class="t" style="left:307px;width:200px;text-align:right;top:299px;height:16px;line-height:16px;color:#000;font-size:12.5px">4.0%</div>
<div class="gb" style="left:508px;top:297px;width:18px;height:18px;border-color:#BFBFBF"></div>
<svg class="a" style="left:509px;top:298px" width="16" height="16" viewBox="0 0 16 16"><path d="M2.5 4 L11.5 4 L7 11.5 Z" fill="none" stroke="#000" stroke-width="1"/><rect x="14" y="12" width="1.3" height="1.3" fill="#000"/></svg>
<div class="gb" style="left:528px;top:297px;width:18px;height:18px;border-color:#BFBFBF"></div>
<svg class="a" style="left:529px;top:298px" width="16" height="16" viewBox="0 0 16 16"><path d="M2 12 L12 12 L7 3 Z" fill="#000"/><rect x="14" y="12" width="1.3" height="1.3" fill="#000"/></svg>
<div class="t" style="left:392px;width:200px;text-align:right;top:299px;height:16px;line-height:16px;color:#000;font-size:12.5px">2.0%</div>
<div class="gb" style="left:593px;top:297px;width:18px;height:18px;border-color:#BFBFBF"></div>
<svg class="a" style="left:594px;top:298px" width="16" height="16" viewBox="0 0 16 16"><path d="M2.5 4 L11.5 4 L7 11.5 Z" fill="none" stroke="#000" stroke-width="1"/><rect x="14" y="12" width="1.3" height="1.3" fill="#000"/></svg>
<div class="gb" style="left:613px;top:297px;width:18px;height:18px;border-color:#BFBFBF"></div>
<svg class="a" style="left:614px;top:298px" width="16" height="16" viewBox="0 0 16 16"><path d="M2 12 L12 12 L7 3 Z" fill="#000"/><rect x="14" y="12" width="1.3" height="1.3" fill="#000"/></svg>
<div class="t" style="left:634px;top:297px;height:16px;line-height:16px;color:#000;font-size:12.5px">500,000</div>
<svg class="a" style="left:695px;top:301px" width="11" height="11" viewBox="0 0 11 11"><circle cx="5.5" cy="5.5" r="5.5" fill="#000"/></svg>
<div class="t" style="left:707px;top:297px;height:16px;line-height:16px;color:#000;font-size:12.5px">최저:4.0...</div>
<div class="gb" style="left:771px;top:297px;width:20px;height:19px;font-size:11px;color:#000">EQ.</div>
<div class="t" style="left:792px;width:30px;text-align:center;top:299px;height:16px;line-height:16px;color:#000;font-size:12.5px">93</div>
<div class="t" style="left:680px;width:200px;text-align:right;top:299px;height:16px;line-height:16px;color:#2A1FE8;font-size:12.5px">5,966</div>
<div class="t" style="left:722px;width:200px;text-align:right;top:299px;height:16px;line-height:16px;color:#000;font-size:12.5px">-2.8%</div>
<div class="a" style="left:15px;top:316px;width:919px;height:3px;background:#0000F0"></div>
<div class="a" style="left:71px;top:319px;width:20px;height:20px;background:#215E8A"></div>
<div class="a" style="left:242px;top:319px;width:39px;height:20px;background:#FF0000"></div>
<div class="a" style="left:281px;top:319px;width:75px;height:20px;background:#00FFFF"></div>
<div class="a" style="left:356px;top:319px;width:95px;height:20px;background:#F8E5A2"></div>
<div class="a" style="left:451px;top:319px;width:96px;height:20px;background:#FDE1DD"></div>
<div class="a" style="left:547px;top:319px;width:84px;height:20px;background:#FDECEB"></div>
<div class="a" style="left:631px;top:319px;width:61px;height:20px;background:#F1EBF8"></div>
<div class="a" style="left:881px;top:319px;width:43px;height:20px;background:#F8DB80"></div>
<div class="a" style="left:924px;top:319px;width:10px;height:20px;background:#E0E0E0"></div>
<div class="a" style="left:20px;top:319px;width:1px;height:20px;background:repeating-linear-gradient(180deg,#A0A0A0 0 1px,transparent 1px 2px)"></div>
<div class="a" style="left:41px;top:319px;width:1px;height:20px;background:repeating-linear-gradient(180deg,#A0A0A0 0 1px,transparent 1px 2px)"></div>
<div class="a" style="left:71px;top:319px;width:1px;height:20px;background:repeating-linear-gradient(180deg,#A0A0A0 0 1px,transparent 1px 2px)"></div>
<div class="a" style="left:91px;top:319px;width:1px;height:20px;background:repeating-linear-gradient(180deg,#A0A0A0 0 1px,transparent 1px 2px)"></div>
<div class="a" style="left:242px;top:319px;width:1px;height:20px;background:repeating-linear-gradient(180deg,#A0A0A0 0 1px,transparent 1px 2px)"></div>
<div class="a" style="left:281px;top:319px;width:1px;height:20px;background:repeating-linear-gradient(180deg,#A0A0A0 0 1px,transparent 1px 2px)"></div>
<div class="a" style="left:356px;top:319px;width:1px;height:20px;background:repeating-linear-gradient(180deg,#A0A0A0 0 1px,transparent 1px 2px)"></div>
<div class="a" style="left:451px;top:319px;width:1px;height:20px;background:repeating-linear-gradient(180deg,#A0A0A0 0 1px,transparent 1px 2px)"></div>
<div class="a" style="left:547px;top:319px;width:1px;height:20px;background:repeating-linear-gradient(180deg,#A0A0A0 0 1px,transparent 1px 2px)"></div>
<div class="a" style="left:631px;top:319px;width:1px;height:20px;background:repeating-linear-gradient(180deg,#A0A0A0 0 1px,transparent 1px 2px)"></div>
<div class="a" style="left:692px;top:319px;width:1px;height:20px;background:repeating-linear-gradient(180deg,#A0A0A0 0 1px,transparent 1px 2px)"></div>
<div class="a" style="left:792px;top:319px;width:1px;height:20px;background:repeating-linear-gradient(180deg,#A0A0A0 0 1px,transparent 1px 2px)"></div>
<div class="a" style="left:822px;top:319px;width:1px;height:20px;background:repeating-linear-gradient(180deg,#A0A0A0 0 1px,transparent 1px 2px)"></div>
<div class="a" style="left:881px;top:319px;width:1px;height:20px;background:repeating-linear-gradient(180deg,#A0A0A0 0 1px,transparent 1px 2px)"></div>
<div class="a" style="left:924px;top:319px;width:1px;height:20px;background:repeating-linear-gradient(180deg,#A0A0A0 0 1px,transparent 1px 2px)"></div>
<div class="a" style="left:281px;top:319px;width:1px;height:20px;background:#0000C0"></div>
<div class="a" style="left:15px;top:338px;width:919px;height:1px;background:#A0A0A0"></div>
<div class="t" style="left:23px;top:321px;height:16px;line-height:16px;color:#000;font-size:12.5px">0</div>
<div class="t" id="s24" style="left:94px;top:321px;height:16px;line-height:16px;color:#000;font-size:12.5px;transform:scaleX(0.9358);transform-origin:0 50%">전체 *코인*(자동 체크 권...</div>
<div class="a" style="left:245px;top:323px;width:12px;height:12px;background:linear-gradient(135deg,#E4E4E4,#FFFFFF);border:1px solid #8A93A6"></div>
<svg class="a" style="left:247px;top:325px" width="9" height="8" viewBox="0 0 9 8"><path d="M1 4 L3.5 7 L8 1" fill="none" stroke="#1F2E4E" stroke-width="1.8"/></svg>
<div class="t" style="left:250px;width:200px;text-align:right;top:322px;height:16px;line-height:16px;color:#000;font-size:12.5px">-100.0%</div>
<div class="t" style="left:346px;width:200px;text-align:right;top:322px;height:16px;line-height:16px;color:#000;font-size:12.5px">2.8%</div>
<div class="t" style="left:430px;width:200px;text-align:right;top:322px;height:16px;line-height:16px;color:#000;font-size:12.5px">2.0%</div>
<div class="t" style="left:634px;top:320px;height:16px;line-height:16px;color:#000;font-size:12.5px">0%</div>
<div class="t" style="left:792px;width:30px;text-align:center;top:322px;height:16px;line-height:16px;color:#000;font-size:12.5px">0</div>
<div class="t" style="left:680px;width:200px;text-align:right;top:322px;height:16px;line-height:16px;color:#000;font-size:12.5px">0</div>
<div class="t" style="left:722px;width:200px;text-align:right;top:322px;height:16px;line-height:16px;color:#000;font-size:12.5px">0.0%</div>
<div class="a" style="left:71px;top:339px;width:20px;height:20px;background:#215E8A"></div>
<div class="a" style="left:242px;top:339px;width:39px;height:20px;background:#2AD3DB"></div>
<div class="a" style="left:281px;top:339px;width:75px;height:20px;background:#00FFFF"></div>
<div class="a" style="left:356px;top:339px;width:95px;height:20px;background:#F8E5A2"></div>
<div class="a" style="left:451px;top:339px;width:96px;height:20px;background:#FDE1DD"></div>
<div class="a" style="left:547px;top:339px;width:84px;height:20px;background:#FDECEB"></div>
<div class="a" style="left:631px;top:339px;width:61px;height:20px;background:#F1EBF8"></div>
<div class="a" style="left:881px;top:339px;width:43px;height:20px;background:#F8DB80"></div>
<div class="a" style="left:924px;top:339px;width:10px;height:20px;background:#E0E0E0"></div>
<div class="a" style="left:20px;top:339px;width:1px;height:20px;background:repeating-linear-gradient(180deg,#A0A0A0 0 1px,transparent 1px 2px)"></div>
<div class="a" style="left:41px;top:339px;width:1px;height:20px;background:repeating-linear-gradient(180deg,#A0A0A0 0 1px,transparent 1px 2px)"></div>
<div class="a" style="left:71px;top:339px;width:1px;height:20px;background:repeating-linear-gradient(180deg,#A0A0A0 0 1px,transparent 1px 2px)"></div>
<div class="a" style="left:91px;top:339px;width:1px;height:20px;background:repeating-linear-gradient(180deg,#A0A0A0 0 1px,transparent 1px 2px)"></div>
<div class="a" style="left:242px;top:339px;width:1px;height:20px;background:repeating-linear-gradient(180deg,#A0A0A0 0 1px,transparent 1px 2px)"></div>
<div class="a" style="left:281px;top:339px;width:1px;height:20px;background:repeating-linear-gradient(180deg,#A0A0A0 0 1px,transparent 1px 2px)"></div>
<div class="a" style="left:356px;top:339px;width:1px;height:20px;background:repeating-linear-gradient(180deg,#A0A0A0 0 1px,transparent 1px 2px)"></div>
<div class="a" style="left:451px;top:339px;width:1px;height:20px;background:repeating-linear-gradient(180deg,#A0A0A0 0 1px,transparent 1px 2px)"></div>
<div class="a" style="left:547px;top:339px;width:1px;height:20px;background:repeating-linear-gradient(180deg,#A0A0A0 0 1px,transparent 1px 2px)"></div>
<div class="a" style="left:631px;top:339px;width:1px;height:20px;background:repeating-linear-gradient(180deg,#A0A0A0 0 1px,transparent 1px 2px)"></div>
<div class="a" style="left:692px;top:339px;width:1px;height:20px;background:repeating-linear-gradient(180deg,#A0A0A0 0 1px,transparent 1px 2px)"></div>
<div class="a" style="left:792px;top:339px;width:1px;height:20px;background:repeating-linear-gradient(180deg,#A0A0A0 0 1px,transparent 1px 2px)"></div>
<div class="a" style="left:822px;top:339px;width:1px;height:20px;background:repeating-linear-gradient(180deg,#A0A0A0 0 1px,transparent 1px 2px)"></div>
<div class="a" style="left:881px;top:339px;width:1px;height:20px;background:repeating-linear-gradient(180deg,#A0A0A0 0 1px,transparent 1px 2px)"></div>
<div class="a" style="left:924px;top:339px;width:1px;height:20px;background:repeating-linear-gradient(180deg,#A0A0A0 0 1px,transparent 1px 2px)"></div>
<div class="a" style="left:281px;top:339px;width:1px;height:20px;background:#0000C0"></div>
<div class="a" style="left:15px;top:358px;width:919px;height:1px;background:#A0A0A0"></div>
<div class="t" style="left:23px;top:341px;height:16px;line-height:16px;color:#000;font-size:12.5px">0</div>
<div class="t" id="s25" style="left:94px;top:341px;height:16px;line-height:16px;color:#000;font-size:12.5px;transform:scaleX(0.9061);transform-origin:0 50%">비트코인 [KRW-BTC]</div>
<div class="a" style="left:245px;top:343px;width:12px;height:12px;background:linear-gradient(135deg,#E4E4E4,#FFFFFF);border:1px solid #8A93A6"></div>
<div class="t" style="left:250px;width:200px;text-align:right;top:342px;height:16px;line-height:16px;color:#000;font-size:12.5px">-100.0%</div>
<div class="t" style="left:346px;width:200px;text-align:right;top:342px;height:16px;line-height:16px;color:#000;font-size:12.5px">2.8%</div>
<div class="t" style="left:430px;width:200px;text-align:right;top:342px;height:16px;line-height:16px;color:#000;font-size:12.5px">2.0%</div>
<div class="t" style="left:634px;top:340px;height:16px;line-height:16px;color:#000;font-size:12.5px">0%</div>
<div class="t" style="left:792px;width:30px;text-align:center;top:342px;height:16px;line-height:16px;color:#000;font-size:12.5px">0</div>
<div class="t" style="left:680px;width:200px;text-align:right;top:342px;height:16px;line-height:16px;color:#2A1FE8;font-size:12.5px">122,949...</div>
<div class="t" style="left:722px;width:200px;text-align:right;top:342px;height:16px;line-height:16px;color:#000;font-size:12.5px">-0.5%</div>
<div class="a" style="left:71px;top:359px;width:20px;height:20px;background:#215E8A"></div>
<div class="a" style="left:242px;top:359px;width:39px;height:20px;background:#2AD3DB"></div>
<div class="a" style="left:281px;top:359px;width:75px;height:20px;background:#00FFFF"></div>
<div class="a" style="left:356px;top:359px;width:95px;height:20px;background:#F8E5A2"></div>
<div class="a" style="left:451px;top:359px;width:96px;height:20px;background:#FDE1DD"></div>
<div class="a" style="left:547px;top:359px;width:84px;height:20px;background:#FDECEB"></div>
<div class="a" style="left:631px;top:359px;width:61px;height:20px;background:#F1EBF8"></div>
<div class="a" style="left:881px;top:359px;width:43px;height:20px;background:#F8DB80"></div>
<div class="a" style="left:924px;top:359px;width:10px;height:20px;background:#E0E0E0"></div>
<div class="a" style="left:20px;top:359px;width:1px;height:20px;background:repeating-linear-gradient(180deg,#A0A0A0 0 1px,transparent 1px 2px)"></div>
<div class="a" style="left:41px;top:359px;width:1px;height:20px;background:repeating-linear-gradient(180deg,#A0A0A0 0 1px,transparent 1px 2px)"></div>
<div class="a" style="left:71px;top:359px;width:1px;height:20px;background:repeating-linear-gradient(180deg,#A0A0A0 0 1px,transparent 1px 2px)"></div>
<div class="a" style="left:91px;top:359px;width:1px;height:20px;background:repeating-linear-gradient(180deg,#A0A0A0 0 1px,transparent 1px 2px)"></div>
<div class="a" style="left:242px;top:359px;width:1px;height:20px;background:repeating-linear-gradient(180deg,#A0A0A0 0 1px,transparent 1px 2px)"></div>
<div class="a" style="left:281px;top:359px;width:1px;height:20px;background:repeating-linear-gradient(180deg,#A0A0A0 0 1px,transparent 1px 2px)"></div>
<div class="a" style="left:356px;top:359px;width:1px;height:20px;background:repeating-linear-gradient(180deg,#A0A0A0 0 1px,transparent 1px 2px)"></div>
<div class="a" style="left:451px;top:359px;width:1px;height:20px;background:repeating-linear-gradient(180deg,#A0A0A0 0 1px,transparent 1px 2px)"></div>
<div class="a" style="left:547px;top:359px;width:1px;height:20px;background:repeating-linear-gradient(180deg,#A0A0A0 0 1px,transparent 1px 2px)"></div>
<div class="a" style="left:631px;top:359px;width:1px;height:20px;background:repeating-linear-gradient(180deg,#A0A0A0 0 1px,transparent 1px 2px)"></div>
<div class="a" style="left:692px;top:359px;width:1px;height:20px;background:repeating-linear-gradient(180deg,#A0A0A0 0 1px,transparent 1px 2px)"></div>
<div class="a" style="left:792px;top:359px;width:1px;height:20px;background:repeating-linear-gradient(180deg,#A0A0A0 0 1px,transparent 1px 2px)"></div>
<div class="a" style="left:822px;top:359px;width:1px;height:20px;background:repeating-linear-gradient(180deg,#A0A0A0 0 1px,transparent 1px 2px)"></div>
<div class="a" style="left:881px;top:359px;width:1px;height:20px;background:repeating-linear-gradient(180deg,#A0A0A0 0 1px,transparent 1px 2px)"></div>
<div class="a" style="left:924px;top:359px;width:1px;height:20px;background:repeating-linear-gradient(180deg,#A0A0A0 0 1px,transparent 1px 2px)"></div>
<div class="a" style="left:281px;top:359px;width:1px;height:20px;background:#0000C0"></div>
<div class="a" style="left:15px;top:378px;width:919px;height:1px;background:#A0A0A0"></div>
<div class="t" style="left:23px;top:361px;height:16px;line-height:16px;color:#000;font-size:12.5px">0</div>
<div class="t" id="s26" style="left:94px;top:361px;height:16px;line-height:16px;color:#000;font-size:12.5px;transform:scaleX(0.9061);transform-origin:0 50%">이더리움 [KRW-ETH]</div>
<div class="a" style="left:245px;top:363px;width:12px;height:12px;background:linear-gradient(135deg,#E4E4E4,#FFFFFF);border:1px solid #8A93A6"></div>
<div class="t" style="left:250px;width:200px;text-align:right;top:362px;height:16px;line-height:16px;color:#000;font-size:12.5px">-100.0%</div>
<div class="t" style="left:346px;width:200px;text-align:right;top:362px;height:16px;line-height:16px;color:#000;font-size:12.5px">2.8%</div>
<div class="t" style="left:430px;width:200px;text-align:right;top:362px;height:16px;line-height:16px;color:#000;font-size:12.5px">2.0%</div>
<div class="t" style="left:634px;top:360px;height:16px;line-height:16px;color:#000;font-size:12.5px">0%</div>
<div class="t" style="left:792px;width:30px;text-align:center;top:362px;height:16px;line-height:16px;color:#000;font-size:12.5px">0</div>
<div class="t" style="left:680px;width:200px;text-align:right;top:362px;height:16px;line-height:16px;color:#2A1FE8;font-size:12.5px">2,348,000</div>
<div class="t" style="left:722px;width:200px;text-align:right;top:362px;height:16px;line-height:16px;color:#000;font-size:12.5px">-1.4%</div>
<div class="a" style="left:15px;top:734px;width:919px;height:15px;background:#F0F0F0"></div>
<div class="a" style="left:32px;top:741px;width:445px;height:2px;background:#7F7F7F"></div>
<div class="a" style="left:935px;top:195px;width:4px;height:557px;background:#A9C8EE"></div>
<div class="a" style="left:944px;top:199px;width:114px;height:19px;background:linear-gradient(#DDEBFB,#CFE2F8);border:1px solid #9EBEE6;border-bottom:none;border-radius:4px 4px 0 0"></div>
<svg class="a" style="left:946px;top:200px" width="16" height="16" viewBox="0 0 16 16"><circle cx="8" cy="8.5" r="7.5" fill="#E04A0A"/><path d="M8 8.5 L4 1.5 M8 8.5 L15 10" stroke="#fff" stroke-width="1.5" fill="none"/></svg>
<div class="t" id="s27" style="left:965px;top:199px;height:16px;line-height:16px;font-size:12.5px;color:#15428B;transform:scaleX(0.9295);transform-origin:0 50%">주식 주문(Order)</div>
<div class="a" style="left:1270px;top:199px;width:10px;height:11px;background:#fff;border:1px solid #333"></div>
<div class="a" style="left:1269px;top:198px;width:87px;height:16px;background:#F0F0F0"></div>
<div class="a" style="left:1270px;top:200px;width:12px;height:12px;background:#fff;border:1px solid #333"></div>
<svg class="a" style="left:1271px;top:202px" width="10" height="8" viewBox="0 0 10 8"><path d="M1 4 L3.5 7 L9 1" fill="none" stroke="#000" stroke-width="1.8"/></svg>
<div class="t" id="s28" style="left:1287px;top:198px;height:15px;line-height:15px;font-size:12px;color:#000;transform:scaleX(0.9025);transform-origin:0 50%">주문창 보이기</div>
<div class="a" style="left:938px;top:217px;width:418px;height:217px;background:#F0F0F0;border:1px solid #A8C4E8;border-radius:3px"></div>
<div class="t" style="left:945px;top:224px;height:15px;line-height:15px;font-size:12.5px;color:#000">코드</div>
<div class="sunk" style="left:972px;top:223px;width:70px;height:20px;background:#fff"></div>
<svg class="a" style="left:1046px;top:221px" width="24" height="24" viewBox="0 0 24 24"><circle cx="12" cy="12" r="12" fill="#FFA500"/><path d="M6 12 L10.5 17 L18 7" fill="none" stroke="#fff" stroke-width="2.5"/></svg>
<div class="a" style="left:1072px;top:223px;width:81px;height:20px;background:#F0F0F0;border-top:1px solid #A0A0A0;border-left:1px solid #A0A0A0"></div>
<div class="a" style="left:1156px;top:223px;width:45px;height:20px;background:#F0F0F0;border-top:1px solid #fff;border-left:1px solid #fff"></div>
<div class="a" style="left:1159px;top:228px;width:12px;height:12px;background:#fff;border:1px solid #333"></div>
<svg class="a" style="left:1160px;top:230px" width="10" height="8" viewBox="0 0 10 8"><path d="M1 4 L3.5 7 L9 1" fill="none" stroke="#000" stroke-width="1.8"/></svg>
<div class="t" style="left:1176px;top:226px;height:15px;line-height:15px;font-size:12px;color:#000">계좌</div>
<div class="sunk" style="left:1202px;top:223px;width:75px;height:19px;background:#fff;overflow:hidden"><div class="t" style="left:2px;top:0px;line-height:16px;font-size:12.5px;letter-spacing:0.6px">yails@ha</div></div>
<div class="a" style="left:1259px;top:225px;width:17px;height:15px;background:#F0F0F0;border-right:1px solid #707070;border-bottom:1px solid #707070;border-left:1px solid #fff;border-top:1px solid #fff"></div>
<svg class="a" style="left:1264px;top:231px" width="7" height="4" viewBox="0 0 7 4"><path d="M0 0 L7 0 L3.5 4 Z" fill="#000"/></svg>
<svg class="a" style="left:1281px;top:221px" width="22" height="23" viewBox="0 0 22 23"><path d="M4 13 A7.5 7.5 0 0 1 16 5.5" fill="none" stroke="#FFA500" stroke-width="3.2"/><path d="M13 1 L19 5.5 L13 9.5 Z" fill="#FFA500"/><path d="M18 10 A7.5 7.5 0 0 1 6 17.5" fill="none" stroke="#FFA500" stroke-width="3.2"/><path d="M9 22 L3 17.5 L9 13.5 Z" fill="#FFA500"/></svg>
<svg class="a" style="left:1309px;top:220px" width="20" height="25" viewBox="0 0 20 25"><path d="M4.5 11 L4.5 7 A5.5 5.5 0 0 1 15.5 7 L15.5 11" fill="none" stroke="#E0288A" stroke-width="3"/><rect x="1" y="10" width="18" height="14" rx="6" fill="#E0288A"/><circle cx="10" cy="15.5" r="2" fill="#fff"/><rect x="9.2" y="16" width="1.6" height="4" fill="#fff"/></svg>
<div class="a" style="left:946px;top:245px;width:173px;height:21px;background:#F0F0F0;border-top:1px solid #909090;border-left:1px solid #909090"></div>
<svg class="a" style="left:1105px;top:249px" width="12" height="16" viewBox="0 0 12 16"><path d="M1 5 L6 0 L11 5 Z" fill="#B8B8B8"/><path d="M1 10 L6 15 L11 10 Z" fill="#B8B8B8"/></svg>
<div class="a" style="left:946px;top:266px;width:173px;height:26px;background:#F0F0F0;border-top:1px solid #909090;border-left:1px solid #909090"></div>
<div class="t" id="s29" style="left:948px;top:267px;height:12px;line-height:12px;font-family:Liberation Mono,monospace;font-size:11px;color:#000;letter-spacing:-0.3px;transform:scaleX(0.9682);transform-origin:0 50%">※SMS:0(0)건 @90*T:0102273</div>
<div class="t" id="s30" style="left:948px;top:279px;height:12px;line-height:12px;font-family:Liberation Mono,monospace;font-size:11px;color:#000;letter-spacing:-0.3px;transform:scaleX(0.8709);transform-origin:0 50%">EXP:2025,07,11/0000,00,00(결</div>
<div class="a" style="left:948px;top:294px;width:102px;height:2px;background:#707070"></div>
<div class="a" style="left:948px;top:313px;width:102px;height:2px;background:#707070"></div>
<div class="a" style="left:947px;top:299px;width:11px;height:11px;border-radius:50%;background:#fff;border:1px solid #888"></div>
<div class="a" style="left:951px;top:303px;width:4px;height:4px;background:#000;border-radius:50%"></div>
<div class="t" id="s31" style="left:964px;top:297px;height:15px;line-height:15px;font-size:12px;color:#0000FF;transform:scaleX(0.9109);transform-origin:0 50%">매수:<u>1</u></div>
<div class="a" style="left:1001px;top:299px;width:11px;height:11px;border-radius:50%;background:#fff;border:1px solid #888"></div>
<div class="t" id="s32" style="left:1018px;top:297px;height:15px;line-height:15px;font-size:12px;color:#FF0000;transform:scaleX(0.9109);transform-origin:0 50%">매도:<u>2</u></div>
<div class="sunk" style="left:1053px;top:292px;width:66px;height:18px;background:#fff"></div>
<div class="t" style="left:1057px;top:293px;height:15px;line-height:15px;font-size:12px;color:#000">시장가</div>
<div class="a" style="left:1101px;top:295px;width:16px;height:14px;background:#F0F0F0;border-right:1px solid #707070;border-bottom:1px solid #707070"></div>
<svg class="a" style="left:1106px;top:301px" width="7" height="4" viewBox="0 0 7 4"><path d="M0 0 L7 0 L3.5 4 Z" fill="#000"/></svg>
<svg class="a" style="left:1120px;top:242px" width="25" height="25" viewBox="0 0 25 25"><path d="M1 9.5 L16 2 L21 10" fill="none" stroke="#E04A0A" stroke-width="1.8"/><path d="M8 7 L15 4 L17 8 Z" fill="#E04A0A"/><rect x="3" y="10" width="20" height="13" fill="#E04A0A"/><rect x="5" y="12" width="16" height="9" fill="none" stroke="#fff" stroke-width="0.9"/><ellipse cx="13" cy="16.5" rx="3.3" ry="3" fill="#E04A0A" stroke="#fff" stroke-width="1.2"/><circle cx="7" cy="16.5" r="1" fill="#fff"/><circle cx="19" cy="16.5" r="1" fill="#fff"/></svg>
<svg class="a" style="left:1145px;top:242px" width="24" height="24" viewBox="0 0 24 24"><circle cx="12" cy="12" r="12" fill="#3D6FD8"/><text x="12" y="18" font-size="16" fill="#fff" text-anchor="middle" font-family="Liberation Sans" font-weight="bold">?</text></svg>
<div class="a" style="left:1121px;top:266px;width:48px;height:47px;background:#fff;border-left:1px solid #A0A0A0;border-top:1px solid #A0A0A0"></div>
<div class="a" style="left:1123px;top:281px;width:45px;height:15px;background:#fff;border:1px dotted #008080"></div>
<div class="t" style="left:1121px;width:48px;text-align:center;top:282px;height:14px;line-height:14px;font-size:13px;color:#FF0000">921만</div>
<div class="a" style="left:1121px;top:307px;width:48px;height:5px;background:#0000F0"></div>
<div class="a" style="left:1170px;top:244px;width:29px;height:69px;background:#fff;border-left:1px solid #A0A0A0;border-top:1px solid #A0A0A0"></div>
<div class="a" style="left:1171px;top:266px;width:27px;height:24px;background:#fff;border:1px dotted #00A000"></div>
<div class="t" style="left:1170px;width:29px;text-align:center;top:267px;height:11px;line-height:11px;font-size:9px;color:#FF00FF">BTC</div>
<div class="t" style="left:1170px;width:29px;text-align:center;top:278px;height:11px;line-height:11px;font-size:9px;color:#FF00FF">-0.5%</div>
<div class="a" style="left:1171px;top:310px;width:27px;height:3px;background:#0000F0"></div>
<div class="a" style="left:1200px;top:245px;width:148px;height:41px;background:#F0F0F0;border-top:1px solid #909090;border-left:1px solid #909090;border-right:1px solid #fff"></div>
<div class="t" id="s33" style="left:1201px;top:245px;height:13px;line-height:13px;font-size:11.5px;color:#000;letter-spacing:-0.2px;transform:scaleX(0.9862);transform-origin:0 50%">예수금 : 1원/미수금 : 0원</div>
<div class="t" id="s34" style="left:1201px;top:257px;height:13px;line-height:13px;font-size:11.5px;color:#000;letter-spacing:-0.2px;transform:scaleX(0.9436);transform-origin:0 50%">출금가능 : 1원</div>
<div class="t" id="s35" style="left:1201px;top:269px;height:13px;line-height:13px;font-size:11.5px;color:#000;letter-spacing:-0.2px;transform:scaleX(0.9981);transform-origin:0 50%">누락 종목 : KRW-XYM,BT</div>
<div class="a" style="left:1200px;top:286px;width:148px;height:27px;background:#F0F0F0;border-top:1px solid #909090;border-left:1px solid #909090"></div>
<svg class="a" style="left:1335px;top:291px" width="12" height="16" viewBox="0 0 12 16"><path d="M1 5 L6 0 L11 5 Z" fill="#B8B8B8"/><path d="M1 10 L6 15 L11 10 Z" fill="#B8B8B8"/></svg>
<div class="a" style="left:945px;top:319px;width:12px;height:12px;background:#fff;border:1px solid #333"></div>
<svg class="a" style="left:946px;top:321px" width="10" height="8" viewBox="0 0 10 8"><path d="M1 4 L3.5 7 L9 1" fill="none" stroke="#000" stroke-width="1.8"/></svg>
<div class="t" id="s36" style="left:962px;top:317px;height:15px;line-height:15px;font-size:12px;color:#FF0000;transform:scaleX(0.8683);transform-origin:0 50%">입력창 표시</div>
<svg class="a" style="left:1020px;top:318px" width="11" height="11" viewBox="0 0 11 11"><path d="M5.5 0.5 L7 4 L10.5 4.2 L7.8 6.5 L8.8 10.3 L5.5 8.2 L2.2 10.3 L3.2 6.5 L0.5 4.2 L4 4 Z" fill="#FF0000"/></svg>
<div class="a" style="left:1041px;top:314px;width:306px;height:20px;background:#DCDCDC"></div>
<div class="a" style="left:1041px;top:314px;width:180px;height:20px;background:#0000FF"></div>
<div class="t" id="s37" style="left:1042px;top:316px;height:16px;line-height:16px;font-size:13px;font-weight:bold;color:#fff;letter-spacing:-0.2px;transform:scaleX(1.1124);transform-origin:0 50%">남음:89.2/2025.07.11/0000.00</div>
<div class="a" style="left:1220px;top:314px;width:61px;height:20px;background:#000"></div>
<div class="t" style="left:1282px;top:317px;height:15px;line-height:15px;font-size:12px;color:#000">*인증됨*</div>
<div class="t" style="left:947px;top:341px;height:15px;line-height:15px;font-size:12px;color:#0000FF">수량</div>
<div class="sunk" style="left:974px;top:338px;width:68px;height:20px"></div>
<div class="t" style="left:1046px;top:342px;height:15px;line-height:15px;font-size:11px;color:#000">x</div>
<div class="sunk" style="left:1056px;top:338px;width:60px;height:20px"></div>
<div class="a" style="left:1118px;top:338px;width:53px;height:20px;background:#F0F0F0;border:1px solid #707070;border-top-color:#fff;border-left-color:#fff;box-shadow:inset -1px -1px 0 #A0A0A0"></div>
<div class="t" style="left:1118px;width:53px;text-align:center;top:340px;height:15px;line-height:15px;font-size:11.5px;color:#000">총금액</div>
<div class="sunk" style="left:1193px;top:338px;width:71px;height:20px;background:#fff"></div>
<div class="t" style="left:1266px;top:339px;height:15px;line-height:15px;font-size:12px;color:#000">원</div>
<div class="sunk" style="left:1277px;top:338px;width:66px;height:19px;background:#fff"></div>
<div class="t" style="left:1281px;top:340px;height:15px;line-height:15px;font-size:12px;color:#000">*선택*</div>
<div class="a" style="left:1325px;top:341px;width:16px;height:14px;background:#F0F0F0;border-right:1px solid #707070;border-bottom:1px solid #707070"></div>
<svg class="a" style="left:1330px;top:347px" width="7" height="4" viewBox="0 0 7 4"><path d="M0 0 L7 0 L3.5 4 Z" fill="#000"/></svg>
<div class="t" style="left:947px;top:366px;height:15px;line-height:15px;font-size:12px;color:#FF0000">가격</div>
<div class="sunk" style="left:974px;top:362px;width:68px;height:20px"></div>
<div class="t" style="left:947px;top:386px;height:15px;line-height:15px;font-size:12px;color:#000">대출</div>
<div class="sunk" style="left:974px;top:385px;width:68px;height:20px"></div>
<div class="a" style="left:1044px;top:361px;width:73px;height:47px;background:#F0F0F0;border:1px solid #fff;border-right:2px solid #707070;border-bottom:2px solid #707070"></div>
<svg class="a" style="left:1047px;top:368px" width="33" height="32" viewBox="0 0 33 32"><path d="M2 3 C5 2 7 3 8 7 L12 22 L27 22 L32 11" fill="none" stroke="#E04A0A" stroke-width="3.5" stroke-linecap="round" stroke-linejoin="round"/><path d="M20 0 L20 10 M15 7 L20 12 L25 7" fill="none" stroke="#E04A0A" stroke-width="4"/><circle cx="14" cy="28" r="3" fill="#E04A0A"/><circle cx="24" cy="28" r="3" fill="#E04A0A"/></svg>
<div class="t" style="left:1080px;width:36px;text-align:center;top:371px;height:14px;line-height:14px;font-size:12px;color:#000">매수</div>
<div class="t" style="left:1080px;width:36px;text-align:center;top:384px;height:14px;line-height:14px;font-size:12px;color:#000">(<u>B</u>uy)</div>
<div class="a" style="left:1118px;top:361px;width:73px;height:47px;background:#F0F0F0;border:1px solid #fff;border-right:2px solid #707070;border-bottom:2px solid #707070"></div>
<svg class="a" style="left:1120px;top:372px" width="28" height="24" viewBox="0 0 28 24"><rect x="1" y="10" width="6" height="12" fill="#3D6FD8"/><path d="M8 10 L13 3 Q15 0 16 3 L15 9 L23 9 Q26 9 25 12 L23 21 Q22 23 20 23 L8 23 Z" fill="#fff" stroke="#3D6FD8" stroke-width="2"/></svg>
<div class="t" style="left:1150px;width:40px;text-align:center;top:368px;height:13px;line-height:13px;font-size:12px;color:#000">전문가</div>
<div class="t" style="left:1150px;width:40px;text-align:center;top:380px;height:13px;line-height:13px;font-size:12px;color:#000">추천</div>
<div class="a" style="left:1193px;top:359px;width:104px;height:9px;background:#F0F0F0;border-top:1px solid #A0A0A0;border-left:1px solid #A0A0A0"></div>
<div class="a" style="left:1193px;top:368px;width:104px;height:18px;background:#0000FF"></div>
<div class="t" style="left:1194px;top:369px;height:16px;line-height:16px;font-size:12.5px;color:#fff">주문상태표시</div>
<div class="a" style="left:1298px;top:359px;width:50px;height:29px;background:#F0F0F0;border:1px solid #fff;border-right:1px solid #707070;border-bottom:2px solid #707070"></div>
<svg class="a" style="left:1301px;top:361px" width="24" height="24" viewBox="0 0 24 24"><rect x="0" y="0" width="24" height="24" rx="5" fill="#E04A0A"/><path d="M7 7 L17 17 M17 7 L7 17" stroke="#fff" stroke-width="3.5"/></svg>
<div class="t" style="left:1326px;top:365px;height:15px;line-height:15px;font-size:12px;color:#000">취소</div>
<svg class="a" style="left:1194px;top:386px" width="24" height="24" viewBox="0 0 24 24"><circle cx="12" cy="12" r="12" fill="#3D6FD8"/><text x="12" y="19" font-size="17" fill="#fff" text-anchor="middle" font-family="Liberation Serif" font-style="italic" font-weight="bold">i</text></svg>
<div class="t" id="s38" style="left:1220px;top:389px;height:15px;line-height:15px;font-size:12px;color:#000;letter-spacing:-0.3px;transform:scaleX(0.9663);transform-origin:0 50%">분할 매수 권장(취소 가능)</div>
<div class="sunk" style="left:944px;top:410px;width:397px;height:22px;background:#fff"></div>
<div class="a" style="left:944px;top:438px;width:163px;height:20px;background:linear-gradient(#E6F0FC,#D6E6F9);border:1px solid #9EBEE6;border-bottom:none;border-radius:4px 4px 0 0"></div>
<svg class="a" style="left:946px;top:440px" width="17" height="16" viewBox="0 0 17 16"><path d="M1 3 L3 3 L5 8" stroke="#E04A0A" stroke-width="1.5" fill="none"/><path d="M4 8 L16 8 Q16 1 10 1 L10 8 Z" fill="#E04A0A"/><path d="M4 8 Q5 12 10 12 Q15 12 16 8 Z" fill="#E04A0A"/><circle cx="6" cy="14" r="1.7" fill="none" stroke="#E04A0A" stroke-width="1.2"/><circle cx="13" cy="14" r="1.7" fill="none" stroke="#E04A0A" stroke-width="1.2"/></svg>
<div class="t" id="s39" style="left:965px;top:439px;height:16px;line-height:16px;font-size:12.5px;color:#15428B;letter-spacing:-0.2px;transform:scaleX(0.9390);transform-origin:0 50%">실시간 EQ(코인-업비트용)</div>
<svg class="a" style="left:1114px;top:440px" width="16" height="16" viewBox="0 0 16 16"><rect x="0" y="0" width="16" height="16" rx="3" fill="#E0288A"/><path d="M4 4 L6 6 L10 6 L12 4 L12 9 Q12 13 8 13 Q4 13 4 9 Z" fill="#fff"/></svg>
<div class="t" id="s40" style="left:1133px;top:439px;height:16px;line-height:16px;font-size:12.5px;color:#15428B;letter-spacing:-0.2px;transform:scaleX(0.9695);transform-origin:0 50%">로그뷰(Log View)</div>
<div class="a" style="left:938px;top:457px;width:418px;height:295px;background:#F0F0F0;border:1px solid #A8C4E8;border-bottom:none;border-radius:3px 3px 0 0"></div>
<div class="sunk" style="left:940px;top:458px;width:116px;height:18px;background:#fff;overflow:hidden"><div class="t" style="left:1px;top:0;line-height:15px;font-size:12px">1.나만의 검색(DLL)</div></div>
<div class="a" style="left:1039px;top:460px;width:16px;height:14px;background:#F0F0F0;border-right:1px solid #707070;border-bottom:1px solid #707070"></div>
<svg class="a" style="left:1044px;top:466px" width="7" height="4" viewBox="0 0 7 4"><path d="M0 0 L7 0 L3.5 4 Z" fill="#000"/></svg>
<svg class="a" style="left:1060px;top:458px" width="25" height="23" viewBox="0 0 25 23"><g fill="#3D6FD8"><circle cx="12.5" cy="11.5" r="8.5"/><rect x="10" y="0" width="5" height="6" rx="1.5" transform="rotate(0 12.5 11.5)"/><rect x="10" y="0" width="5" height="6" rx="1.5" transform="rotate(45 12.5 11.5)"/><rect x="10" y="0" width="5" height="6" rx="1.5" transform="rotate(90 12.5 11.5)"/><rect x="10" y="0" width="5" height="6" rx="1.5" transform="rotate(135 12.5 11.5)"/><rect x="10" y="0" width="5" height="6" rx="1.5" transform="rotate(180 12.5 11.5)"/><rect x="10" y="0" width="5" height="6" rx="1.5" transform="rotate(225 12.5 11.5)"/><rect x="10" y="0" width="5" height="6" rx="1.5" transform="rotate(270 12.5 11.5)"/><rect x="10" y="0" width="5" height="6" rx="1.5" transform="rotate(315 12.5 11.5)"/></g><circle cx="12.5" cy="11.5" r="3.5" fill="#F0F0F0"/></svg>
<div class="t" style="left:1088px;top:460px;height:15px;line-height:15px;font-size:12px;color:#000">설정</div>
<div class="a" style="left:1115px;top:463px;width:12px;height:12px;background:#fff;border:1px solid #333"></div>
<svg class="a" style="left:1116px;top:465px" width="10" height="8" viewBox="0 0 10 8"><path d="M1 4 L3.5 7 L9 1" fill="none" stroke="#000" stroke-width="1.8"/></svg>
<div class="t" id="s41" style="left:1133px;top:461px;height:15px;line-height:15px;font-size:12px;color:#FF0000;transform:scaleX(0.9220);transform-origin:0 50%">종목 검색 ON</div>
<div class="a" style="left:1205px;top:462px;width:51px;height:17px;background:#F0F0F0;border:1px solid #fff;border-top-color:#A0A0A0;border-left-color:#A0A0A0"></div>
<div class="t" style="left:1206px;top:463px;height:15px;line-height:15px;font-size:12px;color:#000;letter-spacing:-0.3px">종목 한도</div>
<div class="sunk" style="left:1258px;top:463px;width:76px;height:18px;background:#fff"></div>
<div class="t" style="left:1262px;top:464px;height:15px;line-height:15px;font-size:12px;color:#000">100 만원</div>
<div class="a" style="left:1316px;top:465px;width:16px;height:14px;background:#F0F0F0;border-right:1px solid #707070;border-bottom:1px solid #707070"></div>
<svg class="a" style="left:1321px;top:471px" width="7" height="4" viewBox="0 0 7 4"><path d="M0 0 L7 0 L3.5 4 Z" fill="#000"/></svg>
<div class="t" style="left:940px;top:482px;height:15px;line-height:15px;font-size:11.5px;color:#000">DLL</div>
<div class="sunk" style="left:961px;top:481px;width:100px;height:18px;background:#fff;overflow:hidden"><div class="t" style="left:2px;top:0;line-height:15px;font-size:12px">YSoft_Stock_h</div></div>
<div class="a" style="left:1043px;top:483px;width:16px;height:14px;background:#F0F0F0;border-right:1px solid #707070;border-bottom:1px solid #707070"></div>
<svg class="a" style="left:1048px;top:489px" width="7" height="4" viewBox="0 0 7 4"><path d="M0 0 L7 0 L3.5 4 Z" fill="#000"/></svg>
<svg class="a" style="left:1064px;top:480px" width="21" height="21" viewBox="0 0 21 21"><path d="M4 12 A7 7 0 0 1 16 6" fill="none" stroke="#FFA500" stroke-width="3"/><path d="M13 2 L18 6 L13 9 Z" fill="#FFA500"/><path d="M17 9 A7 7 0 0 1 5 15" fill="none" stroke="#FFA500" stroke-width="3"/><path d="M8 19 L3 15 L8 12 Z" fill="#FFA500"/></svg>
<svg class="a" style="left:1089px;top:480px" width="24" height="21" viewBox="0 0 24 21"><path d="M3 2 L21 19 M21 2 L3 19" stroke="#E04A0A" stroke-width="4.5"/></svg>
<div class="a" style="left:1114px;top:484px;width:91px;height:30px;background:#F0F0F0;border-top:1px solid #A0A0A0;border-left:1px solid #A0A0A0"></div>
<div class="a" style="left:1205px;top:483px;width:51px;height:17px;background:#F0F0F0;border:1px solid #fff;border-top-color:#A0A0A0;border-left-color:#A0A0A0"></div>
<div class="t" style="left:1206px;top:484px;height:15px;line-height:15px;font-size:12px;color:#000;letter-spacing:-0.3px">1일 한도</div>
<div class="sunk" style="left:1258px;top:482px;width:76px;height:18px;background:#fff"></div>
<div class="t" style="left:1262px;top:483px;height:15px;line-height:15px;font-size:12px;color:#000">20 만원</div>
<div class="a" style="left:1316px;top:484px;width:16px;height:14px;background:#F0F0F0;border-right:1px solid #707070;border-bottom:1px solid #707070"></div>
<svg class="a" style="left:1321px;top:490px" width="7" height="4" viewBox="0 0 7 4"><path d="M0 0 L7 0 L3.5 4 Z" fill="#000"/></svg>
<div class="a" style="left:943px;top:502px;width:170px;height:12px;background:#FF0000"></div>
<div class="t" id="s42" style="left:944px;top:501px;height:14px;line-height:14px;font-size:11.5px;color:#fff;letter-spacing:-0.3px;transform:scaleX(1.0035);transform-origin:0 50%">229:알파퀴크[KRW-AQT]</div>
<div class="t" id="s43" style="left:1114px;top:500px;height:15px;line-height:15px;font-size:12px;color:#000;letter-spacing:-0.3px;transform:scaleX(0.9834);transform-origin:0 50%">현:0/1, 분할: 30만</div>
<div class="a" style="left:1205px;top:500px;width:51px;height:15px;background:#F0F0F0;border:1px solid #fff;border-top-color:#A0A0A0;border-left-color:#A0A0A0"></div>
<div class="t" style="left:1206px;top:500px;height:15px;line-height:15px;font-size:12px;color:#000;letter-spacing:-0.3px">금일 매수</div>
<div class="t" style="left:1259px;top:500px;height:15px;line-height:15px;font-size:12px;color:#000">0코인</div>
<div class="a" style="left:943px;top:514px;width:392px;height:13px;background:#F0F0F0;border-top:1px solid #A0A0A0;border-left:1px solid #A0A0A0"></div>
<div class="t" id="s44" style="left:944px;top:514px;height:12px;line-height:12px;font-size:10px;color:#000;transform:scaleX(0.8735);transform-origin:0 50%">※프로그램 오조작/버그 등으로 발생한 손해의 책임은 개발자에게 있지 않습니다.충분히 숙지하시고 사</div>
<div class="a" style="left:1335px;top:514px;width:22px;height:13px;background:#F0F0F0"></div>
<div class="a" style="left:939px;top:528px;width:416px;height:223px;background:#fff;border:1px solid #848484;border-bottom:2px solid #6E6E6E"></div>
<div class="a" style="left:940px;top:529px;width:395px;height:22px;background:#B8CCE8"></div>
<div class="a" style="left:940px;top:529px;width:1px;height:22px;background:#F4F8FD"></div>
<div class="a" style="left:1068px;top:529px;width:1px;height:22px;background:#9AAFCB"></div>
<div class="t" style="left:943px;top:531px;width:126px;overflow:hidden;line-height:18px;font-size:12.5px;color:#000">종목명</div>
<div class="a" style="left:1069px;top:529px;width:1px;height:22px;background:#F4F8FD"></div>
<div class="a" style="left:1083px;top:529px;width:1px;height:22px;background:#9AAFCB"></div>
<div class="t" style="left:1072px;top:531px;width:12px;overflow:hidden;line-height:18px;font-size:12.5px;color:#000">신</div>
<div class="a" style="left:1084px;top:529px;width:1px;height:22px;background:#F4F8FD"></div>
<div class="a" style="left:1113px;top:529px;width:1px;height:22px;background:#9AAFCB"></div>
<div class="t" style="left:1087px;top:531px;width:27px;overflow:hidden;line-height:18px;font-size:12.5px;color:#000">관</div>
<div class="a" style="left:1114px;top:529px;width:1px;height:22px;background:#F4F8FD"></div>
<div class="a" style="left:1154px;top:529px;width:1px;height:22px;background:#9AAFCB"></div>
<div class="t" style="left:1117px;top:531px;width:38px;overflow:hidden;line-height:18px;font-size:12.5px;color:#000">RSI</div>
<div class="a" style="left:1155px;top:529px;width:1px;height:22px;background:#F4F8FD"></div>
<div class="a" style="left:1194px;top:529px;width:1px;height:22px;background:#9AAFCB"></div>
<div class="t" style="left:1158px;top:531px;width:37px;overflow:hidden;line-height:18px;font-size:12.5px;color:#000">RSI.분</div>
<div class="a" style="left:1195px;top:529px;width:1px;height:22px;background:#F4F8FD"></div>
<div class="a" style="left:1233px;top:529px;width:1px;height:22px;background:#9AAFCB"></div>
<div class="t" style="left:1198px;top:531px;width:36px;overflow:hidden;line-height:18px;font-size:12.5px;color:#000">RSI....</div>
<div class="a" style="left:1234px;top:529px;width:1px;height:22px;background:#F4F8FD"></div>
<div class="a" style="left:1284px;top:529px;width:1px;height:22px;background:#9AAFCB"></div>
<div class="t" style="left:1237px;top:531px;width:48px;overflow:hidden;line-height:18px;font-size:12.5px;color:#000">STO.F</div>
<div class="a" style="left:1285px;top:529px;width:1px;height:22px;background:#F4F8FD"></div>
<div class="a" style="left:1334px;top:529px;width:1px;height:22px;background:#9AAFCB"></div>
<div class="t" style="left:1288px;top:531px;width:47px;overflow:hidden;line-height:18px;font-size:12.5px;color:#000">STO.F.분</div>
<div class="a" style="left:1101px;top:533px;width:12px;height:14px;background:linear-gradient(#F8F8F8,#D8D8D8);border:1px solid #A0A0A0"></div>
<svg class="a" style="left:1104px;top:536px" width="6" height="8" viewBox="0 0 6 8"><path d="M5 0 L5 8 L0 4 Z" fill="#000"/></svg>
<div class="a" style="left:940px;top:551px;width:395px;height:1px;background:#A0A0A0"></div>
<div class="a" style="left:944px;top:569px;width:11px;height:11px;background:linear-gradient(#F4F6FA,#C9D3E4);border:1px solid #3A4A6A;border-radius:1px"></div>
<div class="a" style="left:946px;top:574px;width:7px;height:1px;background:#2A3A5A"></div>
<div class="t" style="left:963px;top:566px;height:16px;line-height:16px;font-size:12.5px;color:#FF0000">조건명:</div>
<div class="a" style="left:940px;top:585px;width:395px;height:2px;background:#A0A0A0"></div>
<div class="a" style="left:940px;top:587px;width:395px;height:20px;background:#F0F0F0"></div>
<div class="a" style="left:1069px;top:587px;width:1px;height:20px;background:repeating-linear-gradient(180deg,#A0A0A0 0 1px,transparent 1px 2px)"></div>
<div class="a" style="left:1084px;top:587px;width:1px;height:20px;background:repeating-linear-gradient(180deg,#A0A0A0 0 1px,transparent 1px 2px)"></div>
<div class="a" style="left:1114px;top:587px;width:1px;height:20px;background:repeating-linear-gradient(180deg,#A0A0A0 0 1px,transparent 1px 2px)"></div>
<div class="a" style="left:1155px;top:587px;width:1px;height:20px;background:repeating-linear-gradient(180deg,#A0A0A0 0 1px,transparent 1px 2px)"></div>
<div class="a" style="left:1195px;top:587px;width:1px;height:20px;background:repeating-linear-gradient(180deg,#A0A0A0 0 1px,transparent 1px 2px)"></div>
<div class="a" style="left:1234px;top:587px;width:1px;height:20px;background:repeating-linear-gradient(180deg,#A0A0A0 0 1px,transparent 1px 2px)"></div>
<div class="a" style="left:1285px;top:587px;width:1px;height:20px;background:repeating-linear-gradient(180deg,#A0A0A0 0 1px,transparent 1px 2px)"></div>
<div class="a" style="left:1335px;top:587px;width:1px;height:20px;background:repeating-linear-gradient(180deg,#A0A0A0 0 1px,transparent 1px 2px)"></div>
<div class="a" style="left:990px;top:587px;width:1px;height:20px;background:repeating-linear-gradient(180deg,#A0A0A0 0 1px,transparent 1px 2px)"></div>
<div class="a" style="left:940px;top:606px;width:395px;height:1px;background:#A0A0A0"></div>
<div class="a" style="left:940px;top:587px;width:395px;height:20px;overflow:hidden">
<div class="t" id="s45" style="left:3px;top:1px;line-height:16px;font-size:12.5px;color:#000;transform:scaleX(0.9038);transform-origin:0 50%">코스모스</div>
<div class="gb" style="left:54px;top:1px;width:24px;height:19px">분석</div>
<div class="gb" style="left:80px;top:1px;width:24px;height:19px">주문</div>
<div class="gb" style="left:106px;top:1px;width:24px;height:19px">정보</div>
</div>
<div class="a" style="left:1088px;top:591px;width:12px;height:12px;background:linear-gradient(135deg,#E4E4E4,#FFFFFF);border:1px solid #8A93A6"></div>
<div class="a" style="left:1114px;top:587px;width:41px;height:20px;overflow:hidden"><div class="t" style="left:3px;top:2px;line-height:16px;font-size:12.5px;color:#000">0.00</div></div>
<div class="a" style="left:1155px;top:587px;width:40px;height:20px;overflow:hidden"><div class="t" style="left:3px;top:2px;line-height:16px;font-size:12.5px;color:#000">0.00</div></div>
<div class="a" style="left:1195px;top:587px;width:39px;height:20px;overflow:hidden"><div class="t" style="left:3px;top:2px;line-height:16px;font-size:12.5px;color:#000">0.00</div></div>
<div class="a" style="left:1234px;top:587px;width:51px;height:20px;overflow:hidden"><div class="t" style="left:3px;top:2px;line-height:16px;font-size:12.5px;color:#000">0.00</div></div>
<div class="a" style="left:1285px;top:587px;width:50px;height:20px;overflow:hidden"><div class="t" style="left:3px;top:2px;line-height:16px;font-size:12.5px;color:#000">0.00</div></div>
<div class="a" style="left:1234px;top:607px;width:101px;height:20px;background:#FFFF60"></div>
<div class="a" style="left:1069px;top:607px;width:1px;height:20px;background:repeating-linear-gradient(180deg,#A0A0A0 0 1px,transparent 1px 2px)"></div>
<div class="a" style="left:1084px;top:607px;width:1px;height:20px;background:repeating-linear-gradient(180deg,#A0A0A0 0 1px,transparent 1px 2px)"></div>
<div class="a" style="left:1114px;top:607px;width:1px;height:20px;background:repeating-linear-gradient(180deg,#A0A0A0 0 1px,transparent 1px 2px)"></div>
<div class="a" style="left:1155px;top:607px;width:1px;height:20px;background:repeating-linear-gradient(180deg,#A0A0A0 0 1px,transparent 1px 2px)"></div>
<div class="a" style="left:1195px;top:607px;width:1px;height:20px;background:repeating-linear-gradient(180deg,#A0A0A0 0 1px,transparent 1px 2px)"></div>
<div class="a" style="left:1234px;top:607px;width:1px;height:20px;background:repeating-linear-gradient(180deg,#A0A0A0 0 1px,transparent 1px 2px)"></div>
<div class="a" style="left:1285px;top:607px;width:1px;height:20px;background:repeating-linear-gradient(180deg,#A0A0A0 0 1px,transparent 1px 2px)"></div>
<div class="a" style="left:1335px;top:607px;width:1px;height:20px;background:repeating-linear-gradient(180deg,#A0A0A0 0 1px,transparent 1px 2px)"></div>
<div class="a" style="left:990px;top:607px;width:1px;height:20px;background:repeating-linear-gradient(180deg,#A0A0A0 0 1px,transparent 1px 2px)"></div>
<div class="a" style="left:940px;top:626px;width:395px;height:1px;background:#A0A0A0"></div>
<div class="a" style="left:940px;top:607px;width:395px;height:20px;overflow:hidden">
<div class="t" id="s46" style="left:3px;top:1px;line-height:16px;font-size:12.5px;color:#000;transform:scaleX(0.9038);transform-origin:0 50%">베라체인</div>
<div class="gb" style="left:54px;top:1px;width:24px;height:19px">분석</div>
<div class="gb" style="left:80px;top:1px;width:24px;height:19px">주문</div>
<div class="gb" style="left:106px;top:1px;width:24px;height:19px">정보</div>
</div>
<div class="a" style="left:1088px;top:611px;width:12px;height:12px;background:linear-gradient(135deg,#E4E4E4,#FFFFFF);border:1px solid #8A93A6"></div>
<svg class="a" style="left:1090px;top:613px" width="9" height="8" viewBox="0 0 9 8"><path d="M1 4 L3.5 7 L8 1" fill="none" stroke="#1F2E4E" stroke-width="1.8"/></svg>
<div class="a" style="left:1114px;top:607px;width:41px;height:20px;overflow:hidden"><div class="t" style="left:3px;top:2px;line-height:16px;font-size:12.5px;color:#000">0.00</div></div>
<div class="a" style="left:1155px;top:607px;width:40px;height:20px;overflow:hidden"><div class="t" style="left:3px;top:2px;line-height:16px;font-size:12.5px;color:#000">0.00</div></div>
<div class="a" style="left:1195px;top:607px;width:39px;height:20px;overflow:hidden"><div class="t" style="left:3px;top:2px;line-height:16px;font-size:12.5px;color:#000">0.00</div></div>
<div class="a" style="left:1234px;top:607px;width:51px;height:20px;overflow:hidden"><div class="t" style="left:3px;top:2px;line-height:16px;font-size:12.5px;color:#000">0.00</div></div>
<div class="a" style="left:1285px;top:607px;width:50px;height:20px;overflow:hidden"><div class="t" style="left:3px;top:2px;line-height:16px;font-size:12.5px;color:#000">0.00</div></div>
<div class="a" style="left:1234px;top:627px;width:101px;height:20px;background:#FFFF60"></div>
<div class="a" style="left:1069px;top:627px;width:1px;height:20px;background:repeating-linear-gradient(180deg,#A0A0A0 0 1px,transparent 1px 2px)"></div>
<div class="a" style="left:1084px;top:627px;width:1px;height:20px;background:repeating-linear-gradient(180deg,#A0A0A0 0 1px,transparent 1px 2px)"></div>
<div class="a" style="left:1114px;top:627px;width:1px;height:20px;background:repeating-linear-gradient(180deg,#A0A0A0 0 1px,transparent 1px 2px)"></div>
<div class="a" style="left:1155px;top:627px;width:1px;height:20px;background:repeating-linear-gradient(180deg,#A0A0A0 0 1px,transparent 1px 2px)"></div>
<div class="a" style="left:1195px;top:627px;width:1px;height:20px;background:repeating-linear-gradient(180deg,#A0A0A0 0 1px,transparent 1px 2px)"></div>
<div class="a" style="left:1234px;top:627px;width:1px;height:20px;background:repeating-linear-gradient(180deg,#A0A0A0 0 1px,transparent 1px 2px)"></div>
<div class="a" style="left:1285px;top:627px;width:1px;height:20px;background:repeating-linear-gradient(180deg,#A0A0A0 0 1px,transparent 1px 2px)"></div>
<div class="a" style="left:1335px;top:627px;width:1px;height:20px;background:repeating-linear-gradient(180deg,#A0A0A0 0 1px,transparent 1px 2px)"></div>
<div class="a" style="left:990px;top:627px;width:1px;height:20px;background:repeating-linear-gradient(180deg,#A0A0A0 0 1px,transparent 1px 2px)"></div>
<div class="a" style="left:940px;top:646px;width:395px;height:1px;background:#A0A0A0"></div>
<div class="a" style="left:940px;top:627px;width:395px;height:20px;overflow:hidden">
<div class="t" id="s47" style="left:3px;top:1px;line-height:16px;font-size:12.5px;color:#000;transform:scaleX(0.9038);transform-origin:0 50%">보라</div>
<div class="gb" style="left:54px;top:1px;width:24px;height:19px">분석</div>
<div class="gb" style="left:80px;top:1px;width:24px;height:19px">주문</div>
<div class="gb" style="left:106px;top:1px;width:24px;height:19px">정보</div>
</div>
<div class="a" style="left:1088px;top:631px;width:12px;height:12px;background:linear-gradient(135deg,#E4E4E4,#FFFFFF);border:1px solid #8A93A6"></div>
<div class="a" style="left:1114px;top:627px;width:41px;height:20px;overflow:hidden"><div class="t" style="left:3px;top:2px;line-height:16px;font-size:12.5px;color:#000">0.00</div></div>
<div class="a" style="left:1155px;top:627px;width:40px;height:20px;overflow:hidden"><div class="t" style="left:3px;top:2px;line-height:16px;font-size:12.5px;color:#000">0.00</div></div>
<div class="a" style="left:1195px;top:627px;width:39px;height:20px;overflow:hidden"><div class="t" style="left:3px;top:2px;line-height:16px;font-size:12.5px;color:#000">0.00</div></div>
<div class="a" style="left:1234px;top:627px;width:51px;height:20px;overflow:hidden"><div class="t" style="left:3px;top:2px;line-height:16px;font-size:12.5px;color:#000">0.00</div></div>
<div class="a" style="left:1285px;top:627px;width:50px;height:20px;overflow:hidden"><div class="t" style="left:3px;top:2px;line-height:16px;font-size:12.5px;color:#000">0.00</div></div>
<div class="a" style="left:1234px;top:647px;width:101px;height:20px;background:#FFFF60"></div>
<div class="a" style="left:1069px;top:647px;width:1px;height:20px;background:repeating-linear-gradient(180deg,#A0A0A0 0 1px,transparent 1px 2px)"></div>
<div class="a" style="left:1084px;top:647px;width:1px;height:20px;background:repeating-linear-gradient(180deg,#A0A0A0 0 1px,transparent 1px 2px)"></div>
<div class="a" style="left:1114px;top:647px;width:1px;height:20px;background:repeating-linear-gradient(180deg,#A0A0A0 0 1px,transparent 1px 2px)"></div>
<div class="a" style="left:1155px;top:647px;width:1px;height:20px;background:repeating-linear-gradient(180deg,#A0A0A0 0 1px,transparent 1px 2px)"></div>
<div class="a" style="left:1195px;top:647px;width:1px;height:20px;background:repeating-linear-gradient(180deg,#A0A0A0 0 1px,transparent 1px 2px)"></div>
<div class="a" style="left:1234px;top:647px;width:1px;height:20px;background:repeating-linear-gradient(180deg,#A0A0A0 0 1px,transparent 1px 2px)"></div>
<div class="a" style="left:1285px;top:647px;width:1px;height:20px;background:repeating-linear-gradient(180deg,#A0A0A0 0 1px,transparent 1px 2px)"></div>
<div class="a" style="left:1335px;top:647px;width:1px;height:20px;background:repeating-linear-gradient(180deg,#A0A0A0 0 1px,transparent 1px 2px)"></div>
<div class="a" style="left:990px;top:647px;width:1px;height:20px;background:repeating-linear-gradient(180deg,#A0A0A0 0 1px,transparent 1px 2px)"></div>
<div class="a" style="left:940px;top:666px;width:395px;height:1px;background:#A0A0A0"></div>
<div class="a" style="left:940px;top:647px;width:395px;height:20px;overflow:hidden">
<div class="t" id="s48" style="left:3px;top:1px;line-height:16px;font-size:12.5px;color:#000;transform:scaleX(0.9038);transform-origin:0 50%">엘프</div>
<div class="gb" style="left:54px;top:1px;width:24px;height:19px">분석</div>
<div class="gb" style="left:80px;top:1px;width:24px;height:19px">주문</div>
<div class="gb" style="left:106px;top:1px;width:24px;height:19px">정보</div>
</div>
<div class="a" style="left:1088px;top:651px;width:12px;height:12px;background:linear-gradient(135deg,#E4E4E4,#FFFFFF);border:1px solid #8A93A6"></div>
<div class="a" style="left:1114px;top:647px;width:41px;height:20px;overflow:hidden"><div class="t" style="left:3px;top:2px;line-height:16px;font-size:12.5px;color:#000">0.00</div></div>
<div class="a" style="left:1155px;top:647px;width:40px;height:20px;overflow:hidden"><div class="t" style="left:3px;top:2px;line-height:16px;font-size:12.5px;color:#000">0.00</div></div>
<div class="a" style="left:1195px;top:647px;width:39px;height:20px;overflow:hidden"><div class="t" style="left:3px;top:2px;line-height:16px;font-size:12.5px;color:#000">0.00</div></div>
<div class="a" style="left:1234px;top:647px;width:51px;height:20px;overflow:hidden"><div class="t" style="left:3px;top:2px;line-height:16px;font-size:12.5px;color:#000">0.00</div></div>
<div class="a" style="left:1285px;top:647px;width:50px;height:20px;overflow:hidden"><div class="t" style="left:3px;top:2px;line-height:16px;font-size:12.5px;color:#000">0.00</div></div>
<div class="a" style="left:1234px;top:667px;width:101px;height:20px;background:#FFFF60"></div>
<div class="a" style="left:1069px;top:667px;width:1px;height:20px;background:repeating-linear-gradient(180deg,#A0A0A0 0 1px,transparent 1px 2px)"></div>
<div class="a" style="left:1084px;top:667px;width:1px;height:20px;background:repeating-linear-gradient(180deg,#A0A0A0 0 1px,transparent 1px 2px)"></div>
<div class="a" style="left:1114px;top:667px;width:1px;height:20px;background:repeating-linear-gradient(180deg,#A0A0A0 0 1px,transparent 1px 2px)"></div>
<div class="a" style="left:1155px;top:667px;width:1px;height:20px;background:repeating-linear-gradient(180deg,#A0A0A0 0 1px,transparent 1px 2px)"></div>
<div class="a" style="left:1195px;top:667px;width:1px;height:20px;background:repeating-linear-gradient(180deg,#A0A0A0 0 1px,transparent 1px 2px)"></div>
<div class="a" style="left:1234px;top:667px;width:1px;height:20px;background:repeating-linear-gradient(180deg,#A0A0A0 0 1px,transparent 1px 2px)"></div>
<div class="a" style="left:1285px;top:667px;width:1px;height:20px;background:repeating-linear-gradient(180deg,#A0A0A0 0 1px,transparent 1px 2px)"></div>
<div class="a" style="left:1335px;top:667px;width:1px;height:20px;background:repeating-linear-gradient(180deg,#A0A0A0 0 1px,transparent 1px 2px)"></div>
<div class="a" style="left:990px;top:667px;width:1px;height:20px;background:repeating-linear-gradient(180deg,#A0A0A0 0 1px,transparent 1px 2px)"></div>
<div class="a" style="left:940px;top:686px;width:395px;height:1px;background:#A0A0A0"></div>
<div class="a" style="left:940px;top:667px;width:395px;height:20px;overflow:hidden">
<div class="t" id="s49" style="left:3px;top:1px;line-height:16px;font-size:12.5px;color:#000;transform:scaleX(0.9038);transform-origin:0 50%">게임빌드</div>
<div class="gb" style="left:54px;top:1px;width:24px;height:19px">분석</div>
<div class="gb" style="left:80px;top:1px;width:24px;height:19px">주문</div>
<div class="gb" style="left:106px;top:1px;width:24px;height:19px">정보</div>
</div>
<div class="a" style="left:1088px;top:671px;width:12px;height:12px;background:linear-gradient(135deg,#E4E4E4,#FFFFFF);border:1px solid #8A93A6"></div>
<div class="a" style="left:1114px;top:667px;width:41px;height:20px;overflow:hidden"><div class="t" style="left:3px;top:2px;line-height:16px;font-size:12.5px;color:#000">0.00</div></div>
<div class="a" style="left:1155px;top:667px;width:40px;height:20px;overflow:hidden"><div class="t" style="left:3px;top:2px;line-height:16px;font-size:12.5px;color:#000">0.00</div></div>
<div class="a" style="left:1195px;top:667px;width:39px;height:20px;overflow:hidden"><div class="t" style="left:3px;top:2px;line-height:16px;font-size:12.5px;color:#000">0.00</div></div>
<div class="a" style="left:1234px;top:667px;width:51px;height:20px;overflow:hidden"><div class="t" style="left:3px;top:2px;line-height:16px;font-size:12.5px;color:#000">0.00</div></div>
<div class="a" style="left:1285px;top:667px;width:50px;height:20px;overflow:hidden"><div class="t" style="left:3px;top:2px;line-height:16px;font-size:12.5px;color:#000">0.00</div></div>
<div class="a" style="left:1234px;top:687px;width:101px;height:20px;background:#FFFF60"></div>
<div class="a" style="left:1069px;top:687px;width:1px;height:20px;background:repeating-linear-gradient(180deg,#A0A0A0 0 1px,transparent 1px 2px)"></div>
<div class="a" style="left:1084px;top:687px;width:1px;height:20px;background:repeating-linear-gradient(180deg,#A0A0A0 0 1px,transparent 1px 2px)"></div>
<div class="a" style="left:1114px;top:687px;width:1px;height:20px;background:repeating-linear-gradient(180deg,#A0A0A0 0 1px,transparent 1px 2px)"></div>
<div class="a" style="left:1155px;top:687px;width:1px;height:20px;background:repeating-linear-gradient(180deg,#A0A0A0 0 1px,transparent 1px 2px)"></div>
<div class="a" style="left:1195px;top:687px;width:1px;height:20px;background:repeating-linear-gradient(180deg,#A0A0A0 0 1px,transparent 1px 2px)"></div>
<div class="a" style="left:1234px;top:687px;width:1px;height:20px;background:repeating-linear-gradient(180deg,#A0A0A0 0 1px,transparent 1px 2px)"></div>
<div class="a" style="left:1285px;top:687px;width:1px;height:20px;background:repeating-linear-gradient(180deg,#A0A0A0 0 1px,transparent 1px 2px)"></div>
<div class="a" style="left:1335px;top:687px;width:1px;height:20px;background:repeating-linear-gradient(180deg,#A0A0A0 0 1px,transparent 1px 2px)"></div>
<div class="a" style="left:990px;top:687px;width:1px;height:20px;background:repeating-linear-gradient(180deg,#A0A0A0 0 1px,transparent 1px 2px)"></div>
<div class="a" style="left:940px;top:706px;width:395px;height:1px;background:#A0A0A0"></div>
<div class="a" style="left:940px;top:687px;width:395px;height:20px;overflow:hidden">
<div class="t" id="s50" style="left:3px;top:1px;line-height:16px;font-size:12.5px;color:#000;transform:scaleX(0.9038);transform-origin:0 50%">하이파이</div>
<div class="gb" style="left:54px;top:1px;width:24px;height:19px">분석</div>
<div class="gb" style="left:80px;top:1px;width:24px;height:19px">주문</div>
<div class="gb" style="left:106px;top:1px;width:24px;height:19px">정보</div>
</div>
<div class="a" style="left:1088px;top:691px;width:12px;height:12px;background:linear-gradient(135deg,#E4E4E4,#FFFFFF);border:1px solid #8A93A6"></div>
<div class="a" style="left:1114px;top:687px;width:41px;height:20px;overflow:hidden"><div class="t" style="left:3px;top:2px;line-height:16px;font-size:12.5px;color:#000">0.00</div></div>
<div class="a" style="left:1155px;top:687px;width:40px;height:20px;overflow:hidden"><div class="t" style="left:3px;top:2px;line-height:16px;font-size:12.5px;color:#000">0.00</div></div>
<div class="a" style="left:1195px;top:687px;width:39px;height:20px;overflow:hidden"><div class="t" style="left:3px;top:2px;line-height:16px;font-size:12.5px;color:#000">0.00</div></div>
<div class="a" style="left:1234px;top:687px;width:51px;height:20px;overflow:hidden"><div class="t" style="left:3px;top:2px;line-height:16px;font-size:12.5px;color:#000">0.00</div></div>
<div class="a" style="left:1285px;top:687px;width:50px;height:20px;overflow:hidden"><div class="t" style="left:3px;top:2px;line-height:16px;font-size:12.5px;color:#000">0.00</div></div>
<div class="a" style="left:1234px;top:707px;width:101px;height:20px;background:#FFFF60"></div>
<div class="a" style="left:1069px;top:707px;width:1px;height:20px;background:repeating-linear-gradient(180deg,#A0A0A0 0 1px,transparent 1px 2px)"></div>
<div class="a" style="left:1084px;top:707px;width:1px;height:20px;background:repeating-linear-gradient(180deg,#A0A0A0 0 1px,transparent 1px 2px)"></div>
<div class="a" style="left:1114px;top:707px;width:1px;height:20px;background:repeating-linear-gradient(180deg,#A0A0A0 0 1px,transparent 1px 2px)"></div>
<div class="a" style="left:1155px;top:707px;width:1px;height:20px;background:repeating-linear-gradient(180deg,#A0A0A0 0 1px,transparent 1px 2px)"></div>
<div class="a" style="left:1195px;top:707px;width:1px;height:20px;background:repeating-linear-gradient(180deg,#A0A0A0 0 1px,transparent 1px 2px)"></div>
<div class="a" style="left:1234px;top:707px;width:1px;height:20px;background:repeating-linear-gradient(180deg,#A0A0A0 0 1px,transparent 1px 2px)"></div>
<div class="a" style="left:1285px;top:707px;width:1px;height:20px;background:repeating-linear-gradient(180deg,#A0A0A0 0 1px,transparent 1px 2px)"></div>
<div class="a" style="left:1335px;top:707px;width:1px;height:20px;background:repeating-linear-gradient(180deg,#A0A0A0 0 1px,transparent 1px 2px)"></div>
<div class="a" style="left:990px;top:707px;width:1px;height:20px;background:repeating-linear-gradient(180deg,#A0A0A0 0 1px,transparent 1px 2px)"></div>
<div class="a" style="left:940px;top:726px;width:395px;height:1px;background:#A0A0A0"></div>
<div class="a" style="left:940px;top:707px;width:395px;height:20px;overflow:hidden">
<div class="t" id="s51" style="left:3px;top:1px;line-height:16px;font-size:12.5px;color:#000;transform:scaleX(0.8974);transform-origin:0 50%">저스트</div>
<div class="gb" style="left:54px;top:1px;width:24px;height:19px">분석</div>
<div class="gb" style="left:80px;top:1px;width:24px;height:19px">주문</div>
<div class="gb" style="left:106px;top:1px;width:24px;height:19px">정보</div>
</div>
<div class="a" style="left:1088px;top:711px;width:12px;height:12px;background:linear-gradient(135deg,#E4E4E4,#FFFFFF);border:1px solid #8A93A6"></div>
<div class="a" style="left:1114px;top:707px;width:41px;height:20px;overflow:hidden"><div class="t" style="left:3px;top:2px;line-height:16px;font-size:12.5px;color:#000">0.00</div></div>
<div class="a" style="left:1155px;top:707px;width:40px;height:20px;overflow:hidden"><div class="t" style="left:3px;top:2px;line-height:16px;font-size:12.5px;color:#000">0.00</div></div>
<div class="a" style="left:1195px;top:707px;width:39px;height:20px;overflow:hidden"><div class="t" style="left:3px;top:2px;line-height:16px;font-size:12.5px;color:#000">0.00</div></div>
<div class="a" style="left:1234px;top:707px;width:51px;height:20px;overflow:hidden"><div class="t" style="left:3px;top:2px;line-height:16px;font-size:12.5px;color:#000">0.00</div></div>
<div class="a" style="left:1285px;top:707px;width:50px;height:20px;overflow:hidden"><div class="t" style="left:3px;top:2px;line-height:16px;font-size:12.5px;color:#000">0.00</div></div>
<div class="a" style="left:1234px;top:727px;width:101px;height:6px;background:#FFFF60"></div>
<div class="a" style="left:1069px;top:727px;width:1px;height:6px;background:repeating-linear-gradient(180deg,#A0A0A0 0 1px,transparent 1px 2px)"></div>
<div class="a" style="left:1084px;top:727px;width:1px;height:6px;background:repeating-linear-gradient(180deg,#A0A0A0 0 1px,transparent 1px 2px)"></div>
<div class="a" style="left:1114px;top:727px;width:1px;height:6px;background:repeating-linear-gradient(180deg,#A0A0A0 0 1px,transparent 1px 2px)"></div>
<div class="a" style="left:1155px;top:727px;width:1px;height:6px;background:repeating-linear-gradient(180deg,#A0A0A0 0 1px,transparent 1px 2px)"></div>
<div class="a" style="left:1195px;top:727px;width:1px;height:6px;background:repeating-linear-gradient(180deg,#A0A0A0 0 1px,transparent 1px 2px)"></div>
<div class="a" style="left:1234px;top:727px;width:1px;height:6px;background:repeating-linear-gradient(180deg,#A0A0A0 0 1px,transparent 1px 2px)"></div>
<div class="a" style="left:1285px;top:727px;width:1px;height:6px;background:repeating-linear-gradient(180deg,#A0A0A0 0 1px,transparent 1px 2px)"></div>
<div class="a" style="left:1335px;top:727px;width:1px;height:6px;background:repeating-linear-gradient(180deg,#A0A0A0 0 1px,transparent 1px 2px)"></div>
<div class="a" style="left:990px;top:727px;width:1px;height:6px;background:repeating-linear-gradient(180deg,#A0A0A0 0 1px,transparent 1px 2px)"></div>
<div class="a" style="left:940px;top:746px;width:395px;height:1px;background:#A0A0A0"></div>
<div class="a" style="left:940px;top:727px;width:395px;height:6px;overflow:hidden">
<div class="t" id="s52" style="left:3px;top:1px;line-height:16px;font-size:12.5px;color:#000;transform:scaleX(0.8974);transform-origin:0 50%">가이톤</div>
<div class="gb" style="left:54px;top:1px;width:24px;height:19px">분석</div>
<div class="gb" style="left:80px;top:1px;width:24px;height:19px">주문</div>
<div class="gb" style="left:106px;top:1px;width:24px;height:19px">정보</div>
</div>
<div class="a" style="left:1114px;top:727px;width:41px;height:6px;overflow:hidden"><div class="t" style="left:3px;top:2px;line-height:16px;font-size:12.5px;color:#000">0.00</div></div>
<div class="a" style="left:1155px;top:727px;width:40px;height:6px;overflow:hidden"><div class="t" style="left:3px;top:2px;line-height:16px;font-size:12.5px;color:#000">0.00</div></div>
<div class="a" style="left:1195px;top:727px;width:39px;height:6px;overflow:hidden"><div class="t" style="left:3px;top:2px;line-height:16px;font-size:12.5px;color:#000">0.00</div></div>
<div class="a" style="left:1234px;top:727px;width:51px;height:6px;overflow:hidden"><div class="t" style="left:3px;top:2px;line-height:16px;font-size:12.5px;color:#000">0.00</div></div>
<div class="a" style="left:1285px;top:727px;width:50px;height:6px;overflow:hidden"><div class="t" style="left:3px;top:2px;line-height:16px;font-size:12.5px;color:#000">0.00</div></div>
<div class="a" style="left:940px;top:733px;width:395px;height:16px;background:#F0F0F0"></div>
<div class="a" style="left:957px;top:741px;width:76px;height:2px;background:#7F7F7F"></div>
<div class="a" style="left:1335px;top:529px;width:19px;height:220px;background:#F0F0F0"></div>
<div class="a" style="left:1345px;top:545px;width:2px;height:95px;background:#7F7F7F"></div>
<div class="a" style="left:6px;top:751px;width:1352px;height:27px;background:#87A8D6"></div>
<svg class="a" style="left:9px;top:752px" width="65" height="25" viewBox="0 0 65 25"><defs><linearGradient id="og" x1="0" y1="0" x2="0" y2="1"><stop offset="0" stop-color="#FFD570"/><stop offset="0.5" stop-color="#F9A848"/><stop offset="1" stop-color="#FDD9A0"/></linearGradient></defs><path d="M1 0 L64 0 Q59 1 56 6 L50 20 Q48 24 42 24 L6 24 Q1 24 1 19 Z" fill="url(#og)" stroke="#C89550" stroke-width="1"/></svg>
<svg class="a" style="left:15px;top:757px" width="16" height="16" viewBox="0 0 16 16"><rect x="0" y="0" width="16" height="16" fill="#fff"/><rect x="0" y="2" width="16" height="12" fill="#E0288A"/><path d="M1 4 L8 9 L15 4 M1 13 L6 8 M15 13 L10 8" stroke="#fff" stroke-width="1" fill="none"/></svg>
<div class="t" style="left:34px;top:756px;height:17px;line-height:17px;font-size:12.5px;color:#000">주식</div>
<div class="a" style="left:1px;top:778px;width:1361px;height:1px;background:#F4F8FF"></div>
<div class="a" style="left:1px;top:779px;width:1361px;height:1px;background:#7392C2"></div>
<div class="a" style="left:1px;top:780px;width:1361px;height:23px;background:linear-gradient(#E2EDFC,#D4E5FB 30%,#BCD6F8 32%,#B2CFF6)"></div>
<div class="t" id="s53" style="left:7px;top:784px;height:16px;line-height:16px;font-size:12px;color:#15307A;transform:scaleX(0.8937);transform-origin:0 50%">Ready</div>
<div class="a" style="left:741px;top:781px;width:1px;height:20px;background:#9AB4D8"></div>
<div class="t" id="s54" style="left:746px;top:784px;height:16px;line-height:16px;font-size:12px;color:#1E2A48;transform:scaleX(1.0465);transform-origin:0 50%">On : 20:11:04(1/0)</div>
<div class="t" style="left:901px;top:785px;height:16px;line-height:16px;font-size:12px;color:#1E2A48">*</div>
<div class="t" id="s55" style="left:1021px;top:784px;height:16px;line-height:16px;font-size:12px;color:#1E2A48;transform:scaleX(0.9771);transform-origin:0 50%">100%</div>
<svg class="a" style="left:1060px;top:782px" width="18" height="18" viewBox="0 0 18 18"><circle cx="9" cy="9" r="7.5" fill="#F0F4FA" stroke="#6A7A92" stroke-width="1.2"/><rect x="5" y="8" width="8" height="2" fill="#333"/></svg>
<div class="a" style="left:1077px;top:790px;width:96px;height:1px;background:#6A7A92"></div>
<svg class="a" style="left:1121px;top:781px" width="10" height="14" viewBox="0 0 10 14"><path d="M1 1 L9 1 L9 9 L5 13 L1 9 Z" fill="#F4F6FA" stroke="#6A7A92"/></svg>
<svg class="a" style="left:1172px;top:782px" width="18" height="18" viewBox="0 0 18 18"><circle cx="9" cy="9" r="7.5" fill="#F0F4FA" stroke="#6A7A92" stroke-width="1.2"/><rect x="5" y="8" width="8" height="2" fill="#333"/><rect x="8" y="5" width="2" height="8" fill="#333"/></svg>
<div class="t" id="s56" style="left:1196px;top:784px;height:16px;line-height:16px;font-size:12px;color:#1E2A48;transform:scaleX(0.9722);transform-origin:0 50%">대문자</div>
<div class="a" style="left:1235px;top:781px;width:1px;height:20px;background:#9AB4D8"></div>
<div class="t" id="s57" style="left:1241px;top:784px;height:16px;line-height:16px;font-size:12px;color:#1E2A48;transform:scaleX(0.9722);transform-origin:0 50%">숫자키</div>
<div class="a" style="left:1281px;top:781px;width:1px;height:20px;background:#9AB4D8"></div>
<div class="t" id="s58" style="left:1288px;top:784px;height:16px;line-height:16px;font-size:12px;color:#9AAFC8;transform:scaleX(0.9583);transform-origin:0 50%">스크롤락</div>
<div class="a" style="left:1355px;top:790px;width:2px;height:2px;background:#2A3A5A"></div>
<div class="a" style="left:1351px;top:794px;width:2px;height:2px;background:#2A3A5A"></div>
<div class="a" style="left:1355px;top:794px;width:2px;height:2px;background:#2A3A5A"></div>
<div class="a" style="left:1347px;top:798px;width:2px;height:2px;background:#2A3A5A"></div>
<div class="a" style="left:1351px;top:798px;width:2px;height:2px;background:#2A3A5A"></div>
<div class="a" style="left:1355px;top:798px;width:2px;height:2px;background:#2A3A5A"></div>
<div class="a" style="left:1358px;top:153px;width:4px;height:625px;background:#BFDBFF"></div>
<div class="a" style="left:1362px;top:0px;width:1px;height:803px;background:#2F4B73"></div>
<div class="a" style="left:0px;top:802px;width:1363px;height:1px;background:#2F4B73"></div>
<div class="a" style="left:0px;top:0px;width:1px;height:803px;background:#2F4B73"></div>
<div class="a" style="left:0px;top:0px;width:1363px;height:1px;background:#2F4B73"></div>
<script>(function(){var W={"s0": 724, "s1": 46.5, "s2": 34.6, "s3": 64.6, "s4": 100, "s5": 46, "s6": 58, "s7": 34.3, "s8": 47.6, "s9": 46, "s10": 44, "s11": 22.6, "s12": 27, "s13": 23, "s14": 54, "s15": 63, "s16": 110, "s17": 51, "s18": 50, "s19": 91, "s20": 82, "s21": 76, "s22": 107, "s23": 145, "s24": 142, "s25": 109, "s26": 109, "s27": 89, "s28": 68, "s29": 153, "s30": 152, "s31": 31, "s32": 31, "s33": 126, "s34": 70, "s35": 130, "s36": 55, "s37": 188, "s38": 129, "s39": 139, "s40": 93, "s41": 67, "s42": 126, "s43": 89, "s44": 396, "s45": 47, "s46": 47, "s47": 23.5, "s48": 23.5, "s49": 47, "s50": 47, "s51": 35, "s52": 35, "s53": 31, "s54": 101, "s55": 30, "s56": 35, "s57": 35, "s58": 46};for(var k in W){var e=document.getElementById(k);if(e){e.style.transform="none";var w=e.getBoundingClientRect().width;if(w>0){e.style.transform="scaleX("+(W[k]/w).toFixed(4)+")";e.style.transformOrigin="0 50%";}}}})();</script></body></html>
